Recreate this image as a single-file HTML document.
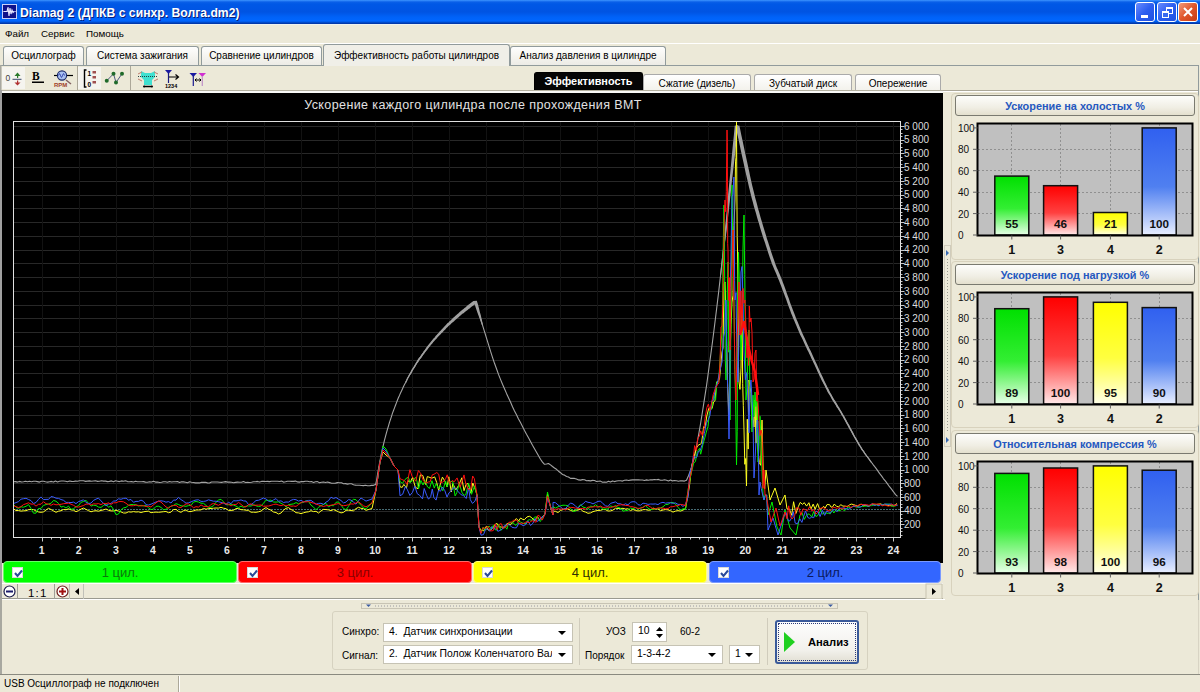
<!DOCTYPE html>
<html><head><meta charset="utf-8">
<style>
*{box-sizing:border-box;margin:0;padding:0}
html,body{width:1200px;height:692px;overflow:hidden;background:#ECE9D8;font-family:"Liberation Sans",sans-serif;font-size:11px;color:#000;position:relative}
.a{position:absolute}
#title{left:0;top:0;width:1200px;height:24px;background:linear-gradient(#3d95ff 0,#0a5fe8 2px,#0058e6 4px,#0054e3 12px,#0062f8 17px,#0066ff 21px,#0040b8 23px,#0030a0 24px)}
#title .t{left:20px;top:6px;color:#fff;font-weight:bold;font-size:12.2px;text-shadow:1px 1px 0 #0a1e78}
.wb{top:2px;width:20px;height:20px;border:1px solid #fff;border-radius:3px;background:linear-gradient(135deg,#6a8cff,#2c5ef0 50%,#1f50e0)}
.wb.x{background:linear-gradient(135deg,#f29a7a,#e0562b 50%,#c83c14)}
#menu{left:0;top:24px;width:1200px;height:20px;background:#ECE9D8}
#menu span{position:absolute;top:3px;font-size:9.8px}
.tab{position:absolute;top:46px;height:19px;border:1px solid #919b9c;border-bottom:none;border-radius:3px 3px 0 0;background:linear-gradient(#fefefe,#f4f3ee 60%,#ecebe6);font-size:10px;text-align:center;padding-top:3px;color:#000}
.tab.act{top:44px;height:22px;background:#f0efe8;border-color:#919b9c;padding-top:5px;z-index:2}
#toolbar{left:0;top:66px;width:945px;height:26px;background:#ECE9D8}
.stab{position:absolute;top:74px;height:16px;border:1px solid #aaa;border-bottom:none;border-radius:3px 3px 0 0;background:linear-gradient(#fff,#f3f2ec);font-size:10px;text-align:center;padding-top:3px}
.stab.act{top:72px;height:18px;background:#050505;border-color:#000;color:#fff;font-weight:bold;font-size:10.9px;padding-top:2px}
#black{left:2px;top:93px;width:941px;height:470px;background:#000}
#leftedge{left:0;top:90px;width:2px;height:510px;background:#a0a0a0}
.seg{position:absolute;top:561px;height:22px;border-radius:4px;text-align:center;font-size:13px;padding-top:3px}
.cb{position:absolute;left:8px;top:5px;width:11px;height:11px;background:#fff;border:1px solid #d8d8d8}
.cb svg{position:absolute;left:0;top:0}
#scroll{left:2px;top:583px;width:941px;height:16px;background:#ECE9D8;border-top:1px solid #fff;border-bottom:1px solid #9a9a90}
.panel{position:absolute;left:951px;width:248px;border:1px solid #d8d2bd;border-radius:4px}
.ptitle{position:absolute;left:955px;width:240px;height:21px;border:1px solid #7a7a70;border-radius:3px;background:linear-gradient(#fdfdfb,#f0eee4 60%,#e4e0ce);color:#2558c0;font-weight:bold;font-size:10.9px;text-align:center;padding-top:4px}
#status{left:0;top:674px;width:1200px;height:18px;border-top:1px solid #8a8a80;background:#ECE9D8}
.combo{position:absolute;height:19px;background:#fff;border:1px solid #c6c3b4;font-size:10.4px;padding:2px 0 0 5px}
.combo .arr{position:absolute;right:6px;top:7px;width:0;height:0;border-left:4px solid transparent;border-right:4px solid transparent;border-top:4px solid #000}
</style></head><body>

<div id="title" class="a">
  <div class="a" style="left:2px;top:4px;width:15px;height:15px;background:#10128a;border:1px solid #c8d0f8"><svg width="13" height="13" style="position:absolute;left:0;top:0"><line x1="0" y1="6.5" x2="13" y2="6.5" stroke="#b0b8f0" stroke-width="0.8"/><path d="M1,6.5 L4,6.5 L5,2 L6,11 L7,3 L8,9 L9,5 L10,7.5 L11,6.5" stroke="#e8e8ff" stroke-width="1.1" fill="none"/></svg></div>
  <div class="a t">Diamag 2 (ДПКВ с синхр. Волга.dm2)</div>
  <div class="a wb" style="left:1135px"><div class="a" style="left:5px;top:12px;width:7px;height:3px;background:#fff"></div></div>
  <div class="a wb" style="left:1157px"><div class="a" style="left:8px;top:4px;width:7px;height:7px;border:1px solid #fff;border-top-width:2px"></div><div class="a" style="left:4px;top:8px;width:7px;height:7px;border:1px solid #fff;border-top-width:2px;background:#3a6af0"></div></div>
  <div class="a wb x" style="left:1178px"><svg width="18" height="18" class="a" style="left:0;top:0"><path d="M5,5 L13,13 M13,5 L5,13" stroke="#fff" stroke-width="2"/></svg></div>
</div>

<div class="a" style="left:0;top:24px;width:1200px;height:1px;background:#eef2f0"></div>
<div id="menu" class="a" style="top:25px;height:18px">
  <span style="left:5px">Файл</span><span style="left:41px">Сервис</span><span style="left:86px">Помощь</span>
</div>
<div class="a" style="left:0;top:43px;width:1200px;height:1px;background:#fff"></div>

<div class="tab" style="left:3px;width:81px">Осциллограф</div>
<div class="tab" style="left:86px;width:113px">Система зажигания</div>
<div class="tab" style="left:201px;width:121px">Сравнение цилиндров</div>
<div class="tab act" style="left:323px;width:187px">Эффективность работы цилиндров</div>
<div class="tab" style="left:510px;width:156px">Анализ давления в цилиндре</div>

<div id="toolbar" class="a"></div>
<div class="a" style="left:0;top:65px;width:323px;height:1px;background:#919b9c"></div>
<div class="a" style="left:510px;top:65px;width:689px;height:1px;background:#919b9c"></div>
<div class="a" style="left:1198px;top:65px;width:1px;height:609px;background:#919b9c"></div>
<div class="a" style="left:943px;top:90px;width:255px;height:1px;background:#aca899"></div>
<div class="a" style="left:943px;top:91px;width:255px;height:1px;background:#fff"></div>
<div class="a" style="left:2px;top:67px;width:23px;height:22px;background:#f5f4ef"></div>
<svg class="a" style="left:0;top:64px" width="220" height="28">
  <rect x="0" y="1" width="1.5" height="27" fill="#a8a8a0"/>
  <!-- icon1 -->
  <text x="5.5" y="17" font-size="8.5" fill="#404040">0</text>
  <line x1="12.5" y1="15.3" x2="21.5" y2="15.3" stroke="#3a4a6a" stroke-width="1"/>
  <path d="M17.5,8.5 L14.5,12 H20.5 Z" fill="#2a7a2a"/><rect x="17" y="11.5" width="1.2" height="2.5" fill="#2a7a2a"/>
  <path d="M17.5,21.5 L14.5,18.5 H20.5 Z" fill="#b03030"/><rect x="17" y="16.5" width="1.2" height="2.5" fill="#b03030"/>
  <!-- icon2 B -->
  <text x="32" y="16" font-size="11.5" font-weight="bold" font-family="Liberation Serif" fill="#000">B</text>
  <rect x="32" y="17.5" width="12" height="1.5" fill="#000"/>
  <!-- icon3 -->
  <line x1="54" y1="11.5" x2="73" y2="11.5" stroke="#000" stroke-width="1.2"/>
  <circle cx="62" cy="11.5" r="4.6" fill="#a8c0f0" stroke="#1a2a6a" stroke-width="1.1"/>
  <path d="M58.5,11.5 q1,-3.5 2,0 t2,0 t2,0" stroke="#2030a0" fill="none" stroke-width="0.9"/>
  <path d="M66,16 L71,20" stroke="#806060" stroke-width="1.5"/>
  <text x="54" y="23" font-size="6" font-weight="bold" fill="#a04028">RPM</text>
  <rect x="77" y="2" width="1" height="24" fill="#aca899"/>
  <rect x="78" y="3" width="23" height="22" fill="#f5f4ef"/>
  <!-- icon4 -->
  <path d="M86.5,6 H84.5 V23 H86.5" stroke="#000" fill="none" stroke-width="1.4"/>
  <text x="87.5" y="11.5" font-size="6.5" font-weight="bold">1</text><text x="87.5" y="23" font-size="6.5" font-weight="bold">0</text>
  <rect x="92.5" y="7" width="3.5" height="2.5" fill="#a05050"/><rect x="92.5" y="12" width="3.5" height="2.5" fill="#a05050"/><rect x="92.5" y="17" width="3.5" height="2.5" fill="#a05050"/>
  <!-- icon5 zigzag -->
  <path d="M106.75,16.75 L113.5,9.75 L116,18.5 L122,9.75" stroke="#505a80" stroke-width="1" fill="none"/>
  <circle cx="106.75" cy="16.75" r="2" fill="#1f6a2a"/><circle cx="113.5" cy="9.75" r="2" fill="#1f6a2a"/><circle cx="116" cy="18.5" r="2" fill="#1f6a2a"/><circle cx="122" cy="9.75" r="2" fill="#1f6a2a"/>
  <rect x="130" y="2" width="1" height="24" fill="#aca899"/>
  <!-- icon6 cyan -->
  <path d="M141,7 L145,9 H151 L155,7 V13 L152,16 V21 H144 V16 L141,13 Z" fill="#40e0d0"/>
  <line x1="138" y1="12.5" x2="158" y2="12.5" stroke="#204040" stroke-dasharray="1 1"/>
  <path d="M138,10 L142,8 M158,10 L154,8 M138,15 L142,17 M158,15 L154,17" stroke="#c08070" stroke-width="1"/>
  <path d="M144,22.5 H152" stroke="#000" stroke-width="1.5"/><circle cx="144" cy="22.5" r="1" fill="#000"/><circle cx="152" cy="22.5" r="1" fill="#000"/>
  <!-- icon7 -->
  <path d="M165,6 H172 L168.5,10 Z" fill="#1a1aa0"/><line x1="168.5" y1="9" x2="168.5" y2="19" stroke="#1a1a80" stroke-width="1.2"/>
  <path d="M169,13 H178 M175.5,10.5 L178.5,13 L175.5,15.5" stroke="#000" fill="none" stroke-width="1.2"/>
  <text x="165" y="23.5" font-size="5.5" font-weight="bold">1234</text>
  <!-- icon8 -->
  <path d="M189.5,9 H197 L193.3,13 Z" fill="#1a1aa0"/><line x1="193.3" y1="12" x2="193.3" y2="22" stroke="#1a1a90" stroke-width="1.2"/>
  <path d="M198.5,9 H206 L202.3,13 Z" fill="#d030d0"/><line x1="202.3" y1="12" x2="202.3" y2="22" stroke="#c090c8" stroke-width="1.2"/>
  <path d="M195,16 H201 M196.5,14.5 L195,16 L196.5,17.5 M199.5,14.5 L201,16 L199.5,17.5" stroke="#000" fill="none"/>
</svg>

<div class="stab act" style="left:534px;width:109px">Эффективность</div>
<div class="stab" style="left:643px;width:108px">Сжатие (дизель)</div>
<div class="stab" style="left:754px;width:98px">Зубчатый диск</div>
<div class="stab" style="left:855px;width:86px">Опережение</div>
<div class="a" style="left:2px;top:90px;width:941px;height:1px;background:#b4b0a0"></div>
<div class="a" style="left:2px;top:91px;width:941px;height:2px;background:#f8f8f6"></div>

<div id="leftedge" class="a"></div>
<div id="black" class="a"></div>
<svg width="1200" height="692" style="position:absolute;left:0;top:0" font-family="Liberation Sans, sans-serif"><g stroke-width="1"><line x1="13.5" y1="524.5" x2="900.5" y2="524.5" stroke="#282828"/><line x1="13.5" y1="511.5" x2="900.5" y2="511.5" stroke="#282828"/><line x1="13.5" y1="497.5" x2="900.5" y2="497.5" stroke="#282828"/><line x1="13.5" y1="483.5" x2="900.5" y2="483.5" stroke="#282828"/><line x1="13.5" y1="470.5" x2="900.5" y2="470.5" stroke="#282828"/><line x1="13.5" y1="456.5" x2="900.5" y2="456.5" stroke="#282828"/><line x1="13.5" y1="442.5" x2="900.5" y2="442.5" stroke="#282828"/><line x1="13.5" y1="428.5" x2="900.5" y2="428.5" stroke="#282828"/><line x1="13.5" y1="415.5" x2="900.5" y2="415.5" stroke="#282828"/><line x1="13.5" y1="401.5" x2="900.5" y2="401.5" stroke="#282828"/><line x1="13.5" y1="387.5" x2="900.5" y2="387.5" stroke="#282828"/><line x1="13.5" y1="373.5" x2="900.5" y2="373.5" stroke="#282828"/><line x1="13.5" y1="360.5" x2="900.5" y2="360.5" stroke="#282828"/><line x1="13.5" y1="346.5" x2="900.5" y2="346.5" stroke="#282828"/><line x1="13.5" y1="332.5" x2="900.5" y2="332.5" stroke="#282828"/><line x1="13.5" y1="318.5" x2="900.5" y2="318.5" stroke="#282828"/><line x1="13.5" y1="305.5" x2="900.5" y2="305.5" stroke="#282828"/><line x1="13.5" y1="291.5" x2="900.5" y2="291.5" stroke="#282828"/><line x1="13.5" y1="277.5" x2="900.5" y2="277.5" stroke="#282828"/><line x1="13.5" y1="263.5" x2="900.5" y2="263.5" stroke="#282828"/><line x1="13.5" y1="250.5" x2="900.5" y2="250.5" stroke="#282828"/><line x1="13.5" y1="236.5" x2="900.5" y2="236.5" stroke="#282828"/><line x1="13.5" y1="222.5" x2="900.5" y2="222.5" stroke="#282828"/><line x1="13.5" y1="208.5" x2="900.5" y2="208.5" stroke="#282828"/><line x1="13.5" y1="195.5" x2="900.5" y2="195.5" stroke="#282828"/><line x1="13.5" y1="181.5" x2="900.5" y2="181.5" stroke="#282828"/><line x1="13.5" y1="167.5" x2="900.5" y2="167.5" stroke="#282828"/><line x1="13.5" y1="153.5" x2="900.5" y2="153.5" stroke="#282828"/><line x1="13.5" y1="140.5" x2="900.5" y2="140.5" stroke="#282828"/><line x1="13.5" y1="126.5" x2="900.5" y2="126.5" stroke="#282828"/><line x1="42.5" y1="121.5" x2="42.5" y2="537.5" stroke="#121212"/><line x1="79.5" y1="121.5" x2="79.5" y2="537.5" stroke="#121212"/><line x1="116.5" y1="121.5" x2="116.5" y2="537.5" stroke="#121212"/><line x1="153.5" y1="121.5" x2="153.5" y2="537.5" stroke="#121212"/><line x1="190.5" y1="121.5" x2="190.5" y2="537.5" stroke="#121212"/><line x1="227.5" y1="121.5" x2="227.5" y2="537.5" stroke="#121212"/><line x1="264.5" y1="121.5" x2="264.5" y2="537.5" stroke="#121212"/><line x1="301.5" y1="121.5" x2="301.5" y2="537.5" stroke="#121212"/><line x1="338.5" y1="121.5" x2="338.5" y2="537.5" stroke="#121212"/><line x1="375.5" y1="121.5" x2="375.5" y2="537.5" stroke="#121212"/><line x1="412.5" y1="121.5" x2="412.5" y2="537.5" stroke="#121212"/><line x1="449.5" y1="121.5" x2="449.5" y2="537.5" stroke="#121212"/><line x1="486.5" y1="121.5" x2="486.5" y2="537.5" stroke="#121212"/><line x1="523.5" y1="121.5" x2="523.5" y2="537.5" stroke="#121212"/><line x1="560.5" y1="121.5" x2="560.5" y2="537.5" stroke="#121212"/><line x1="597.5" y1="121.5" x2="597.5" y2="537.5" stroke="#121212"/><line x1="634.5" y1="121.5" x2="634.5" y2="537.5" stroke="#121212"/><line x1="671.5" y1="121.5" x2="671.5" y2="537.5" stroke="#121212"/><line x1="708.5" y1="121.5" x2="708.5" y2="537.5" stroke="#121212"/><line x1="745.5" y1="121.5" x2="745.5" y2="537.5" stroke="#121212"/><line x1="782.5" y1="121.5" x2="782.5" y2="537.5" stroke="#121212"/><line x1="819.5" y1="121.5" x2="819.5" y2="537.5" stroke="#121212"/><line x1="856.5" y1="121.5" x2="856.5" y2="537.5" stroke="#121212"/><line x1="893.5" y1="121.5" x2="893.5" y2="537.5" stroke="#121212"/></g><g fill="#dcdcdc" font-size="10"><text x="904" y="528.2">200</text><text x="904" y="514.4">400</text><text x="904" y="500.7">600</text><text x="904" y="486.9">800</text><text x="904" y="473.2">1 000</text><text x="904" y="459.5">1 200</text><text x="904" y="445.7">1 400</text><text x="904" y="432.0">1 600</text><text x="904" y="418.2">1 800</text><text x="904" y="404.5">2 000</text><text x="904" y="390.8">2 200</text><text x="904" y="377.0">2 400</text><text x="904" y="363.3">2 600</text><text x="904" y="349.5">2 800</text><text x="904" y="335.8">3 000</text><text x="904" y="322.1">3 200</text><text x="904" y="308.3">3 400</text><text x="904" y="294.6">3 600</text><text x="904" y="280.8">3 800</text><text x="904" y="267.1">4 000</text><text x="904" y="253.4">4 200</text><text x="904" y="239.6">4 400</text><text x="904" y="225.9">4 600</text><text x="904" y="212.1">4 800</text><text x="904" y="198.4">5 000</text><text x="904" y="184.7">5 200</text><text x="904" y="170.9">5 400</text><text x="904" y="157.2">5 600</text><text x="904" y="143.4">5 800</text><text x="904" y="129.7">6 000</text></g><g fill="#e8e8e8" font-size="10.5" font-weight="bold"><text x="41.7" y="554" text-anchor="middle">1</text><text x="78.7" y="554" text-anchor="middle">2</text><text x="115.8" y="554" text-anchor="middle">3</text><text x="152.8" y="554" text-anchor="middle">4</text><text x="189.8" y="554" text-anchor="middle">5</text><text x="226.8" y="554" text-anchor="middle">6</text><text x="263.9" y="554" text-anchor="middle">7</text><text x="300.9" y="554" text-anchor="middle">8</text><text x="337.9" y="554" text-anchor="middle">9</text><text x="375.0" y="554" text-anchor="middle">10</text><text x="412.0" y="554" text-anchor="middle">11</text><text x="449.0" y="554" text-anchor="middle">12</text><text x="486.1" y="554" text-anchor="middle">13</text><text x="523.1" y="554" text-anchor="middle">14</text><text x="560.1" y="554" text-anchor="middle">15</text><text x="597.1" y="554" text-anchor="middle">16</text><text x="634.2" y="554" text-anchor="middle">17</text><text x="671.2" y="554" text-anchor="middle">18</text><text x="708.2" y="554" text-anchor="middle">19</text><text x="745.3" y="554" text-anchor="middle">20</text><text x="782.3" y="554" text-anchor="middle">21</text><text x="819.3" y="554" text-anchor="middle">22</text><text x="856.4" y="554" text-anchor="middle">23</text><text x="893.4" y="554" text-anchor="middle">24</text></g><g stroke="#c8c8c8" stroke-width="1"><line x1="900.5" y1="524.5" x2="904.5" y2="524.5"/><line x1="900.5" y1="528.5" x2="902.5" y2="528.5"/><line x1="900.5" y1="531.5" x2="902.5" y2="531.5"/><line x1="900.5" y1="535.5" x2="902.5" y2="535.5"/><line x1="900.5" y1="511.5" x2="904.5" y2="511.5"/><line x1="900.5" y1="514.5" x2="902.5" y2="514.5"/><line x1="900.5" y1="518.5" x2="902.5" y2="518.5"/><line x1="900.5" y1="521.5" x2="902.5" y2="521.5"/><line x1="900.5" y1="497.5" x2="904.5" y2="497.5"/><line x1="900.5" y1="500.5" x2="902.5" y2="500.5"/><line x1="900.5" y1="504.5" x2="902.5" y2="504.5"/><line x1="900.5" y1="507.5" x2="902.5" y2="507.5"/><line x1="900.5" y1="483.5" x2="904.5" y2="483.5"/><line x1="900.5" y1="487.5" x2="902.5" y2="487.5"/><line x1="900.5" y1="490.5" x2="902.5" y2="490.5"/><line x1="900.5" y1="494.5" x2="902.5" y2="494.5"/><line x1="900.5" y1="470.5" x2="904.5" y2="470.5"/><line x1="900.5" y1="473.5" x2="902.5" y2="473.5"/><line x1="900.5" y1="476.5" x2="902.5" y2="476.5"/><line x1="900.5" y1="480.5" x2="902.5" y2="480.5"/><line x1="900.5" y1="456.5" x2="904.5" y2="456.5"/><line x1="900.5" y1="459.5" x2="902.5" y2="459.5"/><line x1="900.5" y1="463.5" x2="902.5" y2="463.5"/><line x1="900.5" y1="466.5" x2="902.5" y2="466.5"/><line x1="900.5" y1="442.5" x2="904.5" y2="442.5"/><line x1="900.5" y1="445.5" x2="902.5" y2="445.5"/><line x1="900.5" y1="449.5" x2="902.5" y2="449.5"/><line x1="900.5" y1="452.5" x2="902.5" y2="452.5"/><line x1="900.5" y1="428.5" x2="904.5" y2="428.5"/><line x1="900.5" y1="432.5" x2="902.5" y2="432.5"/><line x1="900.5" y1="435.5" x2="902.5" y2="435.5"/><line x1="900.5" y1="439.5" x2="902.5" y2="439.5"/><line x1="900.5" y1="415.5" x2="904.5" y2="415.5"/><line x1="900.5" y1="418.5" x2="902.5" y2="418.5"/><line x1="900.5" y1="421.5" x2="902.5" y2="421.5"/><line x1="900.5" y1="425.5" x2="902.5" y2="425.5"/><line x1="900.5" y1="401.5" x2="904.5" y2="401.5"/><line x1="900.5" y1="404.5" x2="902.5" y2="404.5"/><line x1="900.5" y1="408.5" x2="902.5" y2="408.5"/><line x1="900.5" y1="411.5" x2="902.5" y2="411.5"/><line x1="900.5" y1="387.5" x2="904.5" y2="387.5"/><line x1="900.5" y1="390.5" x2="902.5" y2="390.5"/><line x1="900.5" y1="394.5" x2="902.5" y2="394.5"/><line x1="900.5" y1="397.5" x2="902.5" y2="397.5"/><line x1="900.5" y1="373.5" x2="904.5" y2="373.5"/><line x1="900.5" y1="377.5" x2="902.5" y2="377.5"/><line x1="900.5" y1="380.5" x2="902.5" y2="380.5"/><line x1="900.5" y1="384.5" x2="902.5" y2="384.5"/><line x1="900.5" y1="360.5" x2="904.5" y2="360.5"/><line x1="900.5" y1="363.5" x2="902.5" y2="363.5"/><line x1="900.5" y1="366.5" x2="902.5" y2="366.5"/><line x1="900.5" y1="370.5" x2="902.5" y2="370.5"/><line x1="900.5" y1="346.5" x2="904.5" y2="346.5"/><line x1="900.5" y1="349.5" x2="902.5" y2="349.5"/><line x1="900.5" y1="353.5" x2="902.5" y2="353.5"/><line x1="900.5" y1="356.5" x2="902.5" y2="356.5"/><line x1="900.5" y1="332.5" x2="904.5" y2="332.5"/><line x1="900.5" y1="336.5" x2="902.5" y2="336.5"/><line x1="900.5" y1="339.5" x2="902.5" y2="339.5"/><line x1="900.5" y1="342.5" x2="902.5" y2="342.5"/><line x1="900.5" y1="318.5" x2="904.5" y2="318.5"/><line x1="900.5" y1="322.5" x2="902.5" y2="322.5"/><line x1="900.5" y1="325.5" x2="902.5" y2="325.5"/><line x1="900.5" y1="329.5" x2="902.5" y2="329.5"/><line x1="900.5" y1="305.5" x2="904.5" y2="305.5"/><line x1="900.5" y1="308.5" x2="902.5" y2="308.5"/><line x1="900.5" y1="311.5" x2="902.5" y2="311.5"/><line x1="900.5" y1="315.5" x2="902.5" y2="315.5"/><line x1="900.5" y1="291.5" x2="904.5" y2="291.5"/><line x1="900.5" y1="294.5" x2="902.5" y2="294.5"/><line x1="900.5" y1="298.5" x2="902.5" y2="298.5"/><line x1="900.5" y1="301.5" x2="902.5" y2="301.5"/><line x1="900.5" y1="277.5" x2="904.5" y2="277.5"/><line x1="900.5" y1="281.5" x2="902.5" y2="281.5"/><line x1="900.5" y1="284.5" x2="902.5" y2="284.5"/><line x1="900.5" y1="287.5" x2="902.5" y2="287.5"/><line x1="900.5" y1="263.5" x2="904.5" y2="263.5"/><line x1="900.5" y1="267.5" x2="902.5" y2="267.5"/><line x1="900.5" y1="270.5" x2="902.5" y2="270.5"/><line x1="900.5" y1="274.5" x2="902.5" y2="274.5"/><line x1="900.5" y1="250.5" x2="904.5" y2="250.5"/><line x1="900.5" y1="253.5" x2="902.5" y2="253.5"/><line x1="900.5" y1="257.5" x2="902.5" y2="257.5"/><line x1="900.5" y1="260.5" x2="902.5" y2="260.5"/><line x1="900.5" y1="236.5" x2="904.5" y2="236.5"/><line x1="900.5" y1="239.5" x2="902.5" y2="239.5"/><line x1="900.5" y1="243.5" x2="902.5" y2="243.5"/><line x1="900.5" y1="246.5" x2="902.5" y2="246.5"/><line x1="900.5" y1="222.5" x2="904.5" y2="222.5"/><line x1="900.5" y1="226.5" x2="902.5" y2="226.5"/><line x1="900.5" y1="229.5" x2="902.5" y2="229.5"/><line x1="900.5" y1="232.5" x2="902.5" y2="232.5"/><line x1="900.5" y1="208.5" x2="904.5" y2="208.5"/><line x1="900.5" y1="212.5" x2="902.5" y2="212.5"/><line x1="900.5" y1="215.5" x2="902.5" y2="215.5"/><line x1="900.5" y1="219.5" x2="902.5" y2="219.5"/><line x1="900.5" y1="195.5" x2="904.5" y2="195.5"/><line x1="900.5" y1="198.5" x2="902.5" y2="198.5"/><line x1="900.5" y1="202.5" x2="902.5" y2="202.5"/><line x1="900.5" y1="205.5" x2="902.5" y2="205.5"/><line x1="900.5" y1="181.5" x2="904.5" y2="181.5"/><line x1="900.5" y1="184.5" x2="902.5" y2="184.5"/><line x1="900.5" y1="188.5" x2="902.5" y2="188.5"/><line x1="900.5" y1="191.5" x2="902.5" y2="191.5"/><line x1="900.5" y1="167.5" x2="904.5" y2="167.5"/><line x1="900.5" y1="171.5" x2="902.5" y2="171.5"/><line x1="900.5" y1="174.5" x2="902.5" y2="174.5"/><line x1="900.5" y1="178.5" x2="902.5" y2="178.5"/><line x1="900.5" y1="153.5" x2="904.5" y2="153.5"/><line x1="900.5" y1="157.5" x2="902.5" y2="157.5"/><line x1="900.5" y1="160.5" x2="902.5" y2="160.5"/><line x1="900.5" y1="164.5" x2="902.5" y2="164.5"/><line x1="900.5" y1="140.5" x2="904.5" y2="140.5"/><line x1="900.5" y1="143.5" x2="902.5" y2="143.5"/><line x1="900.5" y1="147.5" x2="902.5" y2="147.5"/><line x1="900.5" y1="150.5" x2="902.5" y2="150.5"/><line x1="900.5" y1="126.5" x2="904.5" y2="126.5"/><line x1="900.5" y1="129.5" x2="902.5" y2="129.5"/><line x1="900.5" y1="133.5" x2="902.5" y2="133.5"/><line x1="900.5" y1="136.5" x2="902.5" y2="136.5"/><line x1="42.5" y1="537.5" x2="42.5" y2="541.5"/><line x1="51.5" y1="537.5" x2="51.5" y2="539.5"/><line x1="60.5" y1="537.5" x2="60.5" y2="539.5"/><line x1="69.5" y1="537.5" x2="69.5" y2="539.5"/><line x1="79.5" y1="537.5" x2="79.5" y2="541.5"/><line x1="88.5" y1="537.5" x2="88.5" y2="539.5"/><line x1="97.5" y1="537.5" x2="97.5" y2="539.5"/><line x1="107.5" y1="537.5" x2="107.5" y2="539.5"/><line x1="116.5" y1="537.5" x2="116.5" y2="541.5"/><line x1="125.5" y1="537.5" x2="125.5" y2="539.5"/><line x1="134.5" y1="537.5" x2="134.5" y2="539.5"/><line x1="144.5" y1="537.5" x2="144.5" y2="539.5"/><line x1="153.5" y1="537.5" x2="153.5" y2="541.5"/><line x1="162.5" y1="537.5" x2="162.5" y2="539.5"/><line x1="171.5" y1="537.5" x2="171.5" y2="539.5"/><line x1="181.5" y1="537.5" x2="181.5" y2="539.5"/><line x1="190.5" y1="537.5" x2="190.5" y2="541.5"/><line x1="199.5" y1="537.5" x2="199.5" y2="539.5"/><line x1="208.5" y1="537.5" x2="208.5" y2="539.5"/><line x1="218.5" y1="537.5" x2="218.5" y2="539.5"/><line x1="227.5" y1="537.5" x2="227.5" y2="541.5"/><line x1="236.5" y1="537.5" x2="236.5" y2="539.5"/><line x1="245.5" y1="537.5" x2="245.5" y2="539.5"/><line x1="255.5" y1="537.5" x2="255.5" y2="539.5"/><line x1="264.5" y1="537.5" x2="264.5" y2="541.5"/><line x1="273.5" y1="537.5" x2="273.5" y2="539.5"/><line x1="282.5" y1="537.5" x2="282.5" y2="539.5"/><line x1="292.5" y1="537.5" x2="292.5" y2="539.5"/><line x1="301.5" y1="537.5" x2="301.5" y2="541.5"/><line x1="310.5" y1="537.5" x2="310.5" y2="539.5"/><line x1="319.5" y1="537.5" x2="319.5" y2="539.5"/><line x1="329.5" y1="537.5" x2="329.5" y2="539.5"/><line x1="338.5" y1="537.5" x2="338.5" y2="541.5"/><line x1="347.5" y1="537.5" x2="347.5" y2="539.5"/><line x1="356.5" y1="537.5" x2="356.5" y2="539.5"/><line x1="366.5" y1="537.5" x2="366.5" y2="539.5"/><line x1="375.5" y1="537.5" x2="375.5" y2="541.5"/><line x1="384.5" y1="537.5" x2="384.5" y2="539.5"/><line x1="393.5" y1="537.5" x2="393.5" y2="539.5"/><line x1="403.5" y1="537.5" x2="403.5" y2="539.5"/><line x1="412.5" y1="537.5" x2="412.5" y2="541.5"/><line x1="421.5" y1="537.5" x2="421.5" y2="539.5"/><line x1="431.5" y1="537.5" x2="431.5" y2="539.5"/><line x1="440.5" y1="537.5" x2="440.5" y2="539.5"/><line x1="449.5" y1="537.5" x2="449.5" y2="541.5"/><line x1="458.5" y1="537.5" x2="458.5" y2="539.5"/><line x1="468.5" y1="537.5" x2="468.5" y2="539.5"/><line x1="477.5" y1="537.5" x2="477.5" y2="539.5"/><line x1="486.5" y1="537.5" x2="486.5" y2="541.5"/><line x1="495.5" y1="537.5" x2="495.5" y2="539.5"/><line x1="505.5" y1="537.5" x2="505.5" y2="539.5"/><line x1="514.5" y1="537.5" x2="514.5" y2="539.5"/><line x1="523.5" y1="537.5" x2="523.5" y2="541.5"/><line x1="532.5" y1="537.5" x2="532.5" y2="539.5"/><line x1="542.5" y1="537.5" x2="542.5" y2="539.5"/><line x1="551.5" y1="537.5" x2="551.5" y2="539.5"/><line x1="560.5" y1="537.5" x2="560.5" y2="541.5"/><line x1="569.5" y1="537.5" x2="569.5" y2="539.5"/><line x1="579.5" y1="537.5" x2="579.5" y2="539.5"/><line x1="588.5" y1="537.5" x2="588.5" y2="539.5"/><line x1="597.5" y1="537.5" x2="597.5" y2="541.5"/><line x1="606.5" y1="537.5" x2="606.5" y2="539.5"/><line x1="616.5" y1="537.5" x2="616.5" y2="539.5"/><line x1="625.5" y1="537.5" x2="625.5" y2="539.5"/><line x1="634.5" y1="537.5" x2="634.5" y2="541.5"/><line x1="643.5" y1="537.5" x2="643.5" y2="539.5"/><line x1="653.5" y1="537.5" x2="653.5" y2="539.5"/><line x1="662.5" y1="537.5" x2="662.5" y2="539.5"/><line x1="671.5" y1="537.5" x2="671.5" y2="541.5"/><line x1="680.5" y1="537.5" x2="680.5" y2="539.5"/><line x1="690.5" y1="537.5" x2="690.5" y2="539.5"/><line x1="699.5" y1="537.5" x2="699.5" y2="539.5"/><line x1="708.5" y1="537.5" x2="708.5" y2="541.5"/><line x1="717.5" y1="537.5" x2="717.5" y2="539.5"/><line x1="727.5" y1="537.5" x2="727.5" y2="539.5"/><line x1="736.5" y1="537.5" x2="736.5" y2="539.5"/><line x1="745.5" y1="537.5" x2="745.5" y2="541.5"/><line x1="755.5" y1="537.5" x2="755.5" y2="539.5"/><line x1="764.5" y1="537.5" x2="764.5" y2="539.5"/><line x1="773.5" y1="537.5" x2="773.5" y2="539.5"/><line x1="782.5" y1="537.5" x2="782.5" y2="541.5"/><line x1="792.5" y1="537.5" x2="792.5" y2="539.5"/><line x1="801.5" y1="537.5" x2="801.5" y2="539.5"/><line x1="810.5" y1="537.5" x2="810.5" y2="539.5"/><line x1="819.5" y1="537.5" x2="819.5" y2="541.5"/><line x1="829.5" y1="537.5" x2="829.5" y2="539.5"/><line x1="838.5" y1="537.5" x2="838.5" y2="539.5"/><line x1="847.5" y1="537.5" x2="847.5" y2="539.5"/><line x1="856.5" y1="537.5" x2="856.5" y2="541.5"/><line x1="866.5" y1="537.5" x2="866.5" y2="539.5"/><line x1="875.5" y1="537.5" x2="875.5" y2="539.5"/><line x1="884.5" y1="537.5" x2="884.5" y2="539.5"/><line x1="893.5" y1="537.5" x2="893.5" y2="541.5"/></g><line x1="13.5" y1="509.5" x2="900.5" y2="509.5" stroke="#8fd8e8" stroke-width="1" stroke-dasharray="1 2"/><polyline points="13.5,481.8 15.5,481.6 17.5,482.1 19.5,481.4 21.5,482.0 23.5,481.7 25.5,481.3 27.5,481.8 29.5,481.3 31.5,481.7 33.5,481.3 35.5,481.3 37.5,481.6 39.5,482.1 41.5,481.2 43.5,481.3 45.5,481.8 47.5,482.1 49.5,481.7 51.5,481.4 53.5,482.1 55.5,481.0 57.5,481.9 59.5,481.2 61.5,481.0 63.5,481.0 65.5,481.2 67.5,481.8 69.5,481.0 71.5,481.4 73.5,481.5 75.5,481.1 77.5,481.3 79.5,480.7 81.5,480.7 83.5,480.8 85.5,481.4 87.5,481.1 89.5,480.9 91.5,481.2 93.5,481.0 95.5,480.8 97.5,481.4 99.5,481.2 101.5,480.7 103.5,481.1 105.5,481.1 107.5,481.6 109.5,481.4 111.5,480.9 113.5,481.8 115.5,480.8 117.5,481.2 119.5,481.6 121.5,480.9 123.5,481.3 125.5,480.8 127.5,481.6 129.5,481.8 131.5,481.6 133.5,482.0 135.5,481.3 137.5,481.8 139.5,481.7 141.5,481.7 143.5,481.6 145.5,482.1 147.5,482.2 149.5,481.7 151.5,482.0 153.5,481.3 155.5,482.1 157.5,482.0 159.5,482.5 161.5,482.3 163.5,481.7 165.5,481.8 167.5,482.2 169.5,481.5 171.5,482.0 173.5,481.7 175.5,481.7 177.5,481.6 179.5,482.5 181.5,481.8 183.5,481.9 185.5,482.2 187.5,482.8 189.5,481.8 191.5,482.3 193.5,482.5 195.5,482.9 197.5,482.8 199.5,482.9 201.5,482.2 203.5,482.4 205.5,482.3 207.5,482.9 209.5,483.0 211.5,482.0 213.5,482.0 215.5,482.0 217.5,482.0 219.5,482.3 221.5,482.4 223.5,482.0 225.5,481.6 227.5,482.1 229.5,482.0 231.5,482.3 233.5,482.7 235.5,482.4 237.5,482.1 239.5,482.2 241.5,482.3 243.5,481.5 245.5,482.5 247.5,482.4 249.5,482.5 251.5,482.3 253.5,481.8 255.5,481.8 257.5,481.4 259.5,482.1 261.5,481.4 263.5,481.3 265.5,481.5 267.5,481.4 269.5,481.6 271.5,481.2 273.5,481.2 275.5,481.3 277.5,481.2 279.5,481.5 281.5,481.1 283.5,482.1 285.5,481.8 287.5,481.2 289.5,481.3 291.5,481.4 293.5,481.4 295.5,481.1 297.5,481.9 299.5,482.1 301.5,481.5 303.5,481.6 305.5,481.2 307.5,481.3 309.5,481.7 311.5,481.6 313.5,482.4 315.5,481.7 317.5,481.6 319.5,482.8 321.5,482.3 323.5,482.0 325.5,482.5 327.5,482.0 329.5,482.6 331.5,483.3 333.5,483.2 335.5,483.1 337.5,482.6 339.5,482.8 341.5,482.8 343.5,483.7 345.5,483.6 347.5,484.1 349.5,483.7 351.5,483.8 353.5,484.7 355.5,485.1 357.5,485.2 359.5,485.3 361.5,485.5 363.5,485.6 365.5,485.2 367.5,485.8 369.5,485.8 371.5,485.4 372.5,485.4 373.5,485.4 374.5,484.7 375.5,484.6 376.5,481.0 377.5,474.5 378.5,468.8 379.5,463.4 380.5,458.2 381.5,453.2 382.5,448.6 383.5,444.3 384.5,440.1 385.5,436.3 386.5,432.7 387.5,429.2 388.5,425.8 389.5,422.4 390.5,419.3 391.5,416.3 392.5,413.1 393.5,410.5 394.5,407.9 395.5,405.2 396.5,402.6 397.5,400.0 398.5,397.5 399.5,395.4 400.5,393.0 401.5,390.9 402.5,388.8 403.5,386.5 404.5,384.5 405.5,382.7 406.5,380.7 407.5,378.5 408.5,376.7 409.5,374.9 410.5,373.4 411.5,371.6 412.5,369.6 413.5,368.2 414.5,366.6 415.5,364.9 416.5,363.2 417.5,361.8 418.5,360.1 419.5,358.5 420.5,357.5 421.5,355.9 422.5,354.4 423.5,353.2 424.5,351.6 425.5,350.5 426.5,349.1 427.5,347.6 428.5,346.3 429.5,345.1 430.5,343.8 431.5,342.8 432.5,341.4 433.5,340.3 434.5,339.0 435.5,338.2 436.5,336.8 437.5,335.7 438.5,334.7 439.5,333.7 440.5,332.4 441.5,331.6 442.5,330.4 443.5,329.3 444.5,328.3 445.5,327.1 446.5,326.3 447.5,325.2 448.5,324.1 449.5,323.5 450.5,322.3 451.5,321.5 452.5,320.6 453.5,319.7 454.5,318.7 455.5,317.8 456.5,317.0 457.5,316.2 458.5,315.0 459.5,314.4 460.5,313.4 461.5,312.5 462.5,311.9 463.5,311.0 464.5,310.2 465.5,309.5 466.5,308.7 467.5,307.7 468.5,307.0 469.5,306.2 470.5,305.4 471.5,304.7 472.5,303.9 473.5,303.2 474.5,302.4 475.5,301.8 476.5,304.8 477.5,308.4 478.5,311.9 479.5,314.9 480.5,318.3 482.5,325.1 484.5,331.7 486.5,338.1 488.5,344.6 490.5,351.2 492.5,357.3 494.5,363.3 496.5,368.8 498.5,374.4 500.5,379.4 502.5,384.3 504.5,388.7 506.5,393.4 508.5,397.8 510.5,402.0 512.5,406.7 514.5,410.9 516.5,414.7 518.5,418.9 520.5,422.6 522.5,426.5 524.5,430.5 526.5,434.2 528.5,437.7 530.5,441.5 532.5,445.2 534.5,448.7 536.5,452.2 538.5,455.7 540.5,459.3 542.5,462.1 544.5,464.3 546.5,464.0 548.5,463.5 550.5,464.9 552.5,466.5 554.5,468.0 556.5,469.3 558.5,471.2 560.5,472.7 562.5,474.5 564.5,475.1 566.5,476.5 568.5,477.0 570.5,478.4 572.5,478.2 574.5,478.4 576.5,479.1 578.5,479.9 580.5,480.1 582.5,479.6 584.5,479.7 586.5,480.8 588.5,480.6 590.5,480.9 592.5,480.4 594.5,480.5 596.5,481.5 598.5,481.3 600.5,481.1 602.5,482.3 604.5,482.1 606.5,482.2 608.5,481.2 610.5,482.0 612.5,480.9 614.5,481.6 616.5,481.0 618.5,480.7 620.5,480.8 622.5,481.1 624.5,480.2 626.5,480.0 628.5,480.5 630.5,480.1 632.5,479.9 634.5,479.9 636.5,479.8 638.5,479.9 640.5,480.0 642.5,480.0 644.5,480.5 646.5,479.9 648.5,480.2 650.5,479.7 652.5,479.9 654.5,479.5 656.5,479.7 658.5,479.4 660.5,480.3 662.5,480.2 664.5,479.8 666.5,480.2 668.5,480.9 670.5,480.0 672.5,480.9 674.5,480.5 676.5,480.7 678.5,481.2 680.5,480.7 682.5,480.9 684.5,481.1 686.5,480.3 688.5,475.8 690.5,470.5 692.5,463.9 694.5,457.4 696.5,446.5 698.5,435.4 700.5,424.2 702.5,411.5 704.5,398.7 706.5,385.9 708.5,371.2 710.5,356.7 712.5,341.8 714.5,326.0 716.5,309.8 718.5,293.2 720.5,275.7 721.5,267.1 722.5,258.4 723.5,249.9 724.5,241.1 725.5,232.6 726.5,222.9 727.5,213.2 728.5,203.2 729.5,193.0 730.5,182.9 731.5,173.7 732.5,163.8 733.5,154.3 734.5,144.5 735.5,135.1 736.5,125.6 737.5,125.9 738.5,130.5 739.5,135.3 740.5,139.9 741.5,144.7 742.5,149.3 743.5,154.1 744.5,158.6 745.5,163.2 746.5,167.9 747.5,172.4 748.5,177.0 749.5,181.4 750.5,185.8 751.5,189.9 752.5,194.0 753.5,198.1 754.5,201.7 755.5,205.4 756.5,209.3 757.5,212.6 758.5,216.3 759.5,219.7 760.5,222.8 761.5,226.5 762.5,229.8 763.5,232.9 764.5,236.2 765.5,239.4 766.5,242.2 767.5,245.5 768.5,248.6 769.5,251.8 770.5,254.8 771.5,257.8 772.5,260.6 773.5,263.4 774.5,266.0 775.5,268.5 776.5,270.7 777.5,273.0 778.5,275.4 779.5,277.9 780.5,280.2 781.5,283.1 782.5,285.6 783.5,288.3 784.5,291.1 785.5,293.8 786.5,296.5 787.5,299.1 788.5,302.1 789.5,304.9 790.5,307.5 791.5,310.2 792.5,312.9 793.5,315.2 794.5,318.0 795.5,320.3 796.5,322.7 797.5,325.1 798.5,327.6 799.5,329.7 800.5,332.2 801.5,334.5 802.5,336.5 803.5,338.6 804.5,340.8 805.5,343.0 806.5,345.2 807.5,347.3 808.5,349.4 809.5,351.3 810.5,353.5 811.5,355.7 812.5,358.0 813.5,360.0 814.5,362.3 815.5,364.2 816.5,366.4 817.5,368.7 818.5,371.0 819.5,373.1 820.5,375.3 821.5,377.2 822.5,379.4 823.5,381.5 824.5,383.5 825.5,385.4 826.5,387.6 827.5,389.3 828.5,391.5 829.5,393.3 830.5,394.7 831.5,396.6 832.5,398.5 833.5,400.2 834.5,401.7 835.5,403.2 836.5,404.8 837.5,406.8 838.5,408.1 839.5,409.9 840.5,411.3 841.5,413.2 842.5,415.0 843.5,416.4 844.5,418.5 845.5,420.1 846.5,422.1 847.5,423.8 848.5,425.5 849.5,427.6 850.5,429.3 851.5,431.0 852.5,432.9 853.5,434.9 854.5,436.7 855.5,438.4 856.5,440.1 857.5,442.0 858.5,443.6 859.5,445.5 860.5,446.7 861.5,448.6 862.5,450.1 863.5,451.3 864.5,453.0 865.5,454.4 866.5,455.8 867.5,457.0 868.5,458.3 869.5,459.7 870.5,461.3 871.5,462.5 872.5,463.7 873.5,465.1 874.5,466.4 875.5,467.6 877.5,470.4 879.5,473.4 881.5,475.9 883.5,478.8 885.5,481.2 887.5,483.9 889.5,486.7 891.5,489.2 893.5,491.8 895.5,494.6 897.5,496.4" fill="none" stroke="#a4a4a4" stroke-width="1.1" stroke-opacity="1" stroke-linejoin="round"/><polygon points="406.0,383.0 407.0,380.9 408.0,378.8 409.0,376.9 410.0,375.2 411.1,373.7 412.1,371.9 413.1,370.0 414.1,368.6 415.1,367.0 416.1,365.3 417.1,363.6 418.2,362.2 419.2,360.5 420.2,359.0 421.2,358.0 422.2,356.4 423.2,355.0 424.2,353.7 425.2,352.2 426.2,351.1 427.3,349.7 428.3,348.2 429.3,347.0 430.3,345.7 431.3,344.5 432.3,343.4 433.3,342.1 434.3,341.0 435.3,339.8 436.3,338.9 437.4,337.5 438.3,336.5 439.3,335.5 440.4,334.5 441.4,333.3 442.4,332.4 443.4,331.2 444.4,330.2 445.5,329.2 446.4,328.0 447.4,327.2 448.5,326.1 449.4,325.2 450.4,324.5 451.5,323.3 452.4,322.6 453.5,321.7 454.5,320.7 455.5,319.7 456.5,319.0 457.5,318.1 458.6,317.3 459.5,316.2 460.5,315.6 461.6,314.6 462.4,313.8 463.5,313.2 464.6,312.2 465.5,311.5 466.5,310.8 467.6,310.0 468.6,309.0 469.6,308.4 470.6,307.6 471.5,306.8 472.6,306.1 473.6,305.3 474.6,304.6 475.6,303.9 474.2,302.9 475.0,305.3 476.1,308.8 477.3,312.2 478.4,315.2 479.6,318.6 482.0,325.3 483.0,325.0 481.4,318.0 480.6,314.6 479.7,311.5 478.9,308.0 478.0,304.4 476.8,300.7 473.4,300.9 472.4,301.7 471.4,302.5 470.4,303.3 469.5,304.0 468.4,304.8 467.4,305.6 466.4,306.4 465.4,307.4 464.5,308.1 463.5,308.9 462.4,309.7 461.5,310.6 460.6,311.3 459.4,312.2 458.5,313.2 457.5,313.9 456.4,315.1 455.5,315.8 454.5,316.7 453.5,317.6 452.5,318.6 451.5,319.6 450.6,320.4 449.5,321.3 448.6,322.5 447.6,323.1 446.5,324.3 445.6,325.3 444.6,326.2 443.5,327.5 442.6,328.5 441.6,329.5 440.6,330.7 439.6,331.6 438.6,332.9 437.7,333.8 436.7,334.9 435.6,336.1 434.7,337.4 433.7,338.3 432.7,339.6 431.7,340.7 430.7,342.1 429.7,343.2 428.7,344.5 427.7,345.7 426.7,347.0 425.7,348.6 424.8,349.9 423.8,351.1 422.8,352.7 421.8,353.9 420.8,355.4 419.8,357.0 418.8,358.0 417.8,359.6 416.8,361.3 415.9,362.8 414.9,364.5 413.9,366.3 412.9,367.8 411.9,369.3 410.9,371.3 409.9,373.0 409.0,374.5 408.0,376.4 407.0,378.3 406.0,380.4 405.0,382.5" fill="#a0a0a0"/><polygon points="721.0,275.8 722.0,267.1 723.1,258.5 724.2,249.9 725.2,241.2 726.3,232.7 727.4,223.0 728.5,213.3 729.6,203.3 730.7,193.1 731.7,183.1 732.8,173.8 733.9,164.0 735.0,154.4 736.1,144.7 737.1,135.3 738.2,125.7 734.8,125.4 733.9,134.9 732.9,144.4 732.0,154.1 731.1,163.7 730.2,173.5 729.3,182.8 728.3,192.9 727.4,203.1 726.5,213.1 725.6,222.8 724.7,232.5 723.8,241.0 722.8,249.8 721.9,258.4 721.0,267.0 720.0,275.7" fill="#a0a0a0"/><polygon points="735.7,126.3 736.7,130.9 737.7,135.7 738.7,140.2 739.7,145.1 740.7,149.7 741.7,154.5 742.7,159.0 743.7,163.6 744.7,168.3 745.7,172.8 746.8,177.4 747.8,181.8 748.8,186.2 749.8,190.3 750.8,194.4 751.8,198.5 752.8,202.1 753.8,205.9 754.9,209.8 755.9,213.0 756.9,216.7 757.9,220.2 758.9,223.3 759.9,226.9 760.9,230.3 761.9,233.4 762.9,236.7 764.0,239.9 765.0,242.7 766.0,246.0 767.0,249.1 768.0,252.3 769.0,255.3 770.0,258.3 771.0,261.1 772.0,264.0 773.1,266.5 774.1,269.1 775.1,271.3 776.1,273.6 777.1,275.9 778.1,278.4 779.1,280.8 780.1,283.6 781.1,286.1 782.1,288.8 783.1,291.6 784.2,294.3 785.2,297.0 786.2,299.6 787.2,302.6 788.2,305.3 789.2,308.0 790.2,310.6 791.2,313.4 792.2,315.7 793.2,318.5 794.3,320.8 795.3,323.2 796.3,325.6 797.3,328.1 798.3,330.2 799.3,332.7 800.3,335.0 801.4,337.0 802.4,339.1 803.4,341.3 804.4,343.5 805.4,345.7 806.4,347.8 807.4,349.9 808.4,351.8 809.4,354.0 810.4,356.1 811.4,358.5 812.5,360.5 813.5,362.8 814.5,364.7 815.5,366.9 816.5,369.1 817.5,371.4 818.5,373.6 819.5,375.7 820.5,377.7 821.5,379.9 822.6,381.9 823.6,384.0 824.6,385.8 825.6,388.1 826.6,389.8 827.6,391.9 828.7,393.8 829.7,395.2 830.7,397.1 831.7,398.9 832.7,400.7 833.7,402.2 834.7,403.7 835.7,405.3 836.7,407.2 837.8,408.6 838.8,410.3 839.8,411.8 840.8,413.6 841.8,415.5 842.8,416.8 843.8,418.8 844.8,420.5 845.8,422.5 846.8,424.2 847.8,425.9 848.8,428.0 849.8,429.7 850.9,431.4 851.8,433.2 852.9,435.2 853.9,437.1 854.9,438.8 855.9,440.5 856.9,442.3 857.9,443.9 858.9,445.8 860.0,447.1 861.0,448.9 862.0,450.5 863.0,451.6 864.0,453.4 865.1,454.7 866.1,456.2 867.1,457.3 868.1,458.7 869.0,460.0 870.1,461.6 871.1,462.8 871.9,462.1 870.9,461.0 870.0,459.4 868.9,458.0 867.9,456.6 866.9,455.5 865.9,454.1 865.0,452.7 864.0,450.9 863.0,449.7 862.0,448.2 861.0,446.4 860.1,445.1 859.1,443.3 858.1,441.6 857.1,439.8 856.1,438.1 855.1,436.4 854.1,434.6 853.2,432.5 852.1,430.7 851.2,429.0 850.2,427.3 849.2,425.1 848.2,423.4 847.2,421.7 846.2,419.7 845.2,418.1 844.2,416.0 843.2,414.6 842.2,412.7 841.2,410.9 840.2,409.4 839.2,407.6 838.3,406.3 837.3,404.4 836.3,402.7 835.3,401.1 834.3,399.7 833.3,398.0 832.3,396.2 831.3,394.2 830.3,392.8 829.4,391.0 828.4,388.8 827.4,387.2 826.4,384.9 825.4,383.0 824.4,381.0 823.5,379.0 822.5,376.8 821.5,374.8 820.5,372.7 819.5,370.5 818.5,368.2 817.5,366.0 816.5,363.7 815.5,361.8 814.5,359.5 813.6,357.5 812.6,355.2 811.6,353.0 810.6,350.8 809.6,348.9 808.6,346.7 807.6,344.7 806.6,342.5 805.6,340.3 804.6,338.1 803.6,335.9 802.7,333.9 801.7,331.7 800.7,329.2 799.7,327.1 798.7,324.6 797.7,322.1 796.7,319.8 795.8,317.5 794.8,314.7 793.8,312.3 792.8,309.7 791.8,307.0 790.8,304.4 789.8,301.7 788.8,298.6 787.8,296.0 786.8,293.3 785.9,290.6 784.9,287.8 783.9,285.1 782.9,282.6 781.9,279.7 780.9,277.3 779.9,274.8 778.9,272.4 777.9,270.1 776.9,267.9 775.9,265.4 775.0,262.9 774.0,260.0 773.0,257.3 772.0,254.3 771.0,251.3 770.0,248.1 769.0,245.0 768.0,241.7 767.0,238.9 766.1,235.7 765.1,232.4 764.1,229.3 763.1,226.0 762.1,222.4 761.1,219.2 760.1,215.8 759.1,212.1 758.1,208.8 757.2,205.0 756.2,201.2 755.2,197.7 754.2,193.6 753.2,189.5 752.2,185.4 751.2,181.0 750.2,176.6 749.3,172.0 748.3,167.5 747.3,162.8 746.3,158.2 745.3,153.7 744.3,148.9 743.3,144.3 742.3,139.5 741.3,134.9 740.3,130.1 739.3,125.5" fill="#a0a0a0"/><polyline points="13.5,508.9 16.0,510.5 18.5,510.5 21.0,511.1 23.5,510.8 26.0,510.7 28.5,509.7 31.0,509.5 33.5,509.6 36.0,511.0 38.5,512.0 41.0,512.3 43.5,511.9 46.0,510.0 48.5,508.3 51.0,509.5 53.5,510.9 56.0,512.3 58.5,511.2 61.0,510.7 63.5,509.5 66.0,509.8 68.5,508.8 71.0,509.9 73.5,510.2 76.0,511.7 78.5,510.6 81.0,509.1 83.5,508.1 86.0,509.4 88.5,510.6 91.0,511.8 93.5,511.0 96.0,510.7 98.5,511.2 101.0,510.4 103.5,509.9 106.0,509.0 108.5,510.3 111.0,510.9 113.5,510.9 116.0,510.3 118.5,511.0 121.0,511.9 123.5,513.0 126.0,513.0 128.5,511.8 131.0,512.1 133.5,511.6 136.0,512.0 138.5,511.8 141.0,512.5 143.5,511.8 146.0,511.4 148.5,511.2 151.0,512.7 153.5,512.3 156.0,512.1 158.5,512.3 161.0,512.0 163.5,511.7 166.0,511.5 168.5,512.7 171.0,512.1 173.5,509.6 176.0,509.4 178.5,511.4 181.0,512.3 183.5,510.6 186.0,510.0 188.5,511.6 191.0,511.5 193.5,510.8 196.0,510.0 198.5,510.0 201.0,509.9 203.5,508.4 206.0,509.2 208.5,508.6 211.0,508.5 213.5,508.2 216.0,508.0 218.5,508.1 221.0,507.4 223.5,508.2 226.0,508.7 228.5,510.4 231.0,510.4 233.5,510.2 236.0,508.6 238.5,508.3 241.0,509.7 243.5,509.8 246.0,510.2 248.5,510.4 251.0,512.2 253.5,512.2 256.0,512.3 258.5,511.8 261.0,511.1 263.5,509.0 266.0,507.6 268.5,509.2 271.0,510.1 273.5,512.0 276.0,512.5 278.5,514.0 281.0,513.0 283.5,510.2 286.0,508.3 288.5,507.6 291.0,509.5 293.5,510.7 296.0,512.7 298.5,512.9 301.0,513.6 303.5,512.8 306.0,512.1 308.5,511.8 311.0,510.7 313.5,511.6 316.0,511.3 318.5,513.0 321.0,510.9 323.5,509.4 326.0,509.6 328.5,509.9 331.0,510.6 333.5,509.6 336.0,510.6 338.5,511.8 341.0,512.9 343.5,512.4 346.0,510.3 348.5,510.2 351.0,510.5 353.5,510.8 356.0,508.6 358.5,507.3 361.0,508.3 363.5,508.7 366.0,510.3 372.0,508.5 376.0,490.0 380.0,462.0 383.0,452.0 386.0,455.0 390.0,458.0 394.0,466.0 398.0,470.0 400.0,486.8 402.2,487.4 403.8,484.4 406.5,487.9 408.0,480.7 410.3,482.4 412.5,477.4 415.4,487.3 418.0,488.8 420.3,474.9 422.8,475.5 425.5,484.4 427.3,476.6 428.9,477.1 431.8,478.2 434.7,476.9 436.7,482.5 438.7,490.5 440.6,483.0 442.4,477.1 444.9,481.0 447.1,486.9 448.8,476.8 451.3,492.0 452.8,483.5 455.8,489.8 458.8,485.2 461.8,477.8 464.0,490.7 466.1,484.3 468.2,483.5 470.9,493.2 472.8,483.0 475.5,489.9 477.0,495.0 479.0,527.0 481.0,530.3 483.9,530.8 486.3,526.4 488.0,530.1 490.7,529.8 492.6,528.3 495.5,524.0 497.1,523.5 498.9,526.7 501.6,527.1 504.2,527.7 507.1,523.4 510.0,524.7 511.9,523.4 513.6,521.8 516.3,518.5 518.6,521.0 520.6,518.0 522.9,519.5 524.5,519.6 527.0,516.9 529.7,516.3 531.9,517.9 534.7,521.0 537.3,516.3 539.3,519.6 541.6,517.8 545.0,514.0 547.5,494.0 550.0,505.0 553.0,515.0 553.0,511.1 555.5,511.4 558.0,512.5 560.5,510.5 563.0,509.6 565.5,508.7 568.0,509.0 570.5,510.4 573.0,511.1 575.5,510.4 578.0,510.1 580.5,509.1 583.0,511.3 585.5,512.1 588.0,513.3 590.5,512.9 593.0,511.6 595.5,510.9 598.0,510.4 600.5,510.4 603.0,509.5 605.5,509.7 608.0,511.0 610.5,510.9 613.0,510.1 615.5,508.2 618.0,508.5 620.5,508.5 623.0,508.3 625.5,509.0 628.0,508.8 630.5,510.6 633.0,509.5 635.5,510.5 638.0,510.9 640.5,510.7 643.0,509.7 645.5,509.6 648.0,510.2 650.5,510.1 653.0,508.0 655.5,509.0 658.0,508.9 660.5,510.7 663.0,510.0 665.5,509.6 668.0,509.9 670.5,510.7 673.0,512.1 675.5,511.1 678.0,510.6 680.5,511.1 683.0,510.1 685.5,508.7 688.0,495.1 689.6,484.8 691.7,465.7 693.0,460.4 694.8,453.4 696.8,447.5 698.9,444.5 700.2,444.6 701.6,442.8 703.7,426.6 705.1,427.7 706.8,416.0 708.7,408.4 710.1,408.0 712.2,408.3 713.5,402.0 715.0,400.8 716.6,381.9 718.1,381.3 719.5,379.1 722.0,352.0 723.0,348.0 724.0,283.9 725.0,282.0 726.3,327.3 727.7,386.8 729.0,420.0 730.0,357.2 731.0,324.5 732.0,302.0 733.0,295.2 734.0,225.5 735.0,200.0 735.5,161.9 736.0,157.4 736.5,122.0 736.8,180.0 737.2,236.5 737.5,250.0 738.0,299.2 738.5,366.3 739.0,382.0 740.0,389.4 741.0,368.1 742.0,310.0 742.7,383.6 743.3,405.5 744.0,430.0 744.8,464.3 745.7,458.5 746.5,486.0 747.3,419.2 748.2,449.1 749.0,380.0 750.0,386.5 751.0,393.7 752.0,420.0 753.0,417.3 754.0,427.1 755.0,400.0 756.0,443.1 757.0,402.5 758.0,450.0 759.3,462.7 760.7,465.3 762.0,420.0 763.3,474.9 764.7,488.7 766.0,470.0 770.0,500.0 775.0,488.0 780.0,505.0 785.0,495.0 787.0,508.9 789.4,509.1 791.7,515.3 793.6,501.7 795.9,513.5 798.3,506.7 800.2,502.4 802.6,504.4 804.2,502.6 806.6,506.1 808.9,502.7 810.9,509.1 813.2,504.1 815.1,509.2 817.6,503.6 819.6,509.2 821.8,508.3 823.6,506.3 825.1,508.1 827.1,504.5 829.6,504.7 831.1,507.2 832.7,506.8 834.3,504.0 836.6,506.4 838.7,506.7 840.9,504.7 842.9,506.1 845.2,506.1 847.2,506.6 849.6,504.8 851.3,504.1 853.6,504.6 855.7,505.4 857.9,506.4 860.0,504.4 862.0,504.3 863.8,505.6 866.0,505.3 868.3,506.2 870.1,505.5 872.2,503.9 874.7,504.8 876.9,504.4 878.8,504.1 881.3,503.9 882.9,505.5 885.0,504.6 887.4,505.5 889.3,505.5 891.8,505.9 893.6,505.7 895.4,504.7 897.0,503.5" fill="none" stroke="#ffff20" stroke-width="1.0" stroke-opacity="1" stroke-linejoin="round"/><polyline points="13.5,504.4 16.0,507.1 18.5,508.4 21.0,506.8 23.5,507.2 26.0,506.3 28.5,504.6 31.0,508.5 33.5,513.2 36.0,513.1 38.5,508.5 41.0,508.4 43.5,505.4 46.0,504.6 48.5,504.0 51.0,503.3 53.5,500.5 56.0,501.2 58.5,503.4 61.0,507.1 63.5,506.4 66.0,508.0 68.5,506.1 71.0,509.4 73.5,508.7 76.0,506.8 78.5,505.6 81.0,502.3 83.5,501.5 86.0,500.3 88.5,503.4 91.0,506.1 93.5,505.2 96.0,505.5 98.5,507.1 101.0,507.4 103.5,505.5 106.0,504.2 108.5,507.3 111.0,505.8 113.5,509.4 116.0,514.7 118.5,514.0 121.0,509.8 123.5,507.9 126.0,507.4 128.5,505.3 131.0,504.5 133.5,504.6 136.0,504.8 138.5,506.1 141.0,505.3 143.5,506.0 146.0,505.5 148.5,507.7 151.0,509.6 153.5,509.1 156.0,506.4 158.5,506.2 161.0,507.4 163.5,509.7 166.0,509.3 168.5,507.4 171.0,506.3 173.5,505.4 176.0,503.7 178.5,504.5 181.0,505.9 183.5,506.0 186.0,506.3 188.5,505.6 191.0,505.4 193.5,502.0 196.0,501.5 198.5,502.0 201.0,503.2 203.5,503.3 206.0,505.4 208.5,507.5 211.0,507.2 213.5,505.7 216.0,502.2 218.5,500.0 221.0,499.3 223.5,501.8 226.0,504.7 228.5,504.8 231.0,504.1 233.5,505.2 236.0,506.1 238.5,507.6 241.0,506.1 243.5,507.4 246.0,506.2 248.5,505.9 251.0,506.1 253.5,504.6 256.0,505.8 258.5,506.6 261.0,506.0 263.5,503.2 266.0,500.2 268.5,500.4 271.0,500.1 273.5,502.0 276.0,502.1 278.5,501.8 281.0,503.3 283.5,504.6 286.0,506.9 288.5,504.6 291.0,504.3 293.5,503.9 296.0,502.6 298.5,503.7 301.0,502.7 303.5,502.5 306.0,500.7 308.5,501.5 311.0,505.2 313.5,507.1 316.0,509.8 318.5,507.3 321.0,505.7 323.5,504.4 326.0,503.4 328.5,506.9 331.0,505.4 333.5,505.8 336.0,502.3 338.5,501.9 341.0,505.1 343.5,508.5 346.0,509.7 348.5,506.4 351.0,501.6 353.5,499.3 356.0,499.7 358.5,502.7 361.0,505.3 363.5,508.0 366.0,508.8 372.0,503.0 376.0,490.0 380.0,462.0 383.0,446.0 386.0,449.0 390.0,458.0 394.0,466.0 398.0,470.0 400.0,481.6 402.5,483.3 405.1,479.4 408.1,477.0 410.5,482.5 413.2,479.4 416.0,477.3 418.6,488.7 420.9,480.5 423.0,485.0 424.8,480.6 427.6,487.0 429.5,488.4 431.9,480.7 434.3,488.1 436.0,483.7 438.7,488.4 440.6,485.5 442.8,490.8 445.6,481.0 447.1,486.8 448.7,482.4 450.3,481.4 452.8,481.7 455.1,495.9 456.8,492.7 459.2,483.5 462.1,492.8 464.2,495.3 465.8,494.6 468.6,483.3 471.5,494.3 474.4,486.5 477.0,495.0 479.0,527.0 481.0,533.0 483.0,527.3 484.5,530.3 486.9,527.2 489.3,526.2 491.5,529.0 493.3,525.4 496.2,530.4 498.6,524.2 500.9,530.3 503.5,527.8 505.1,526.7 506.9,529.2 508.4,523.6 511.3,522.3 513.2,523.2 516.0,525.4 518.9,521.3 520.6,522.0 523.2,523.4 526.1,523.5 527.7,520.4 529.5,519.7 532.0,520.4 534.7,516.9 537.5,517.3 540.2,521.6 541.7,519.2 545.0,514.0 547.5,492.0 550.0,505.0 553.0,515.0 553.0,506.6 555.5,508.1 558.0,506.8 560.5,505.8 563.0,505.2 565.5,505.3 568.0,505.7 570.5,508.4 573.0,511.4 575.5,511.2 578.0,507.5 580.5,504.6 583.0,507.1 585.5,507.7 588.0,509.3 590.5,506.0 593.0,506.8 595.5,504.6 598.0,506.8 600.5,506.8 603.0,509.3 605.5,508.9 608.0,509.0 610.5,505.8 613.0,507.1 615.5,505.5 618.0,507.5 620.5,508.1 623.0,511.2 625.5,510.6 628.0,510.3 630.5,508.0 633.0,508.9 635.5,507.4 638.0,509.3 640.5,508.0 643.0,507.3 645.5,505.6 648.0,508.2 650.5,509.6 653.0,509.6 655.5,508.9 658.0,508.4 660.5,508.0 663.0,506.8 665.5,504.6 668.0,504.4 670.5,502.6 673.0,502.5 675.5,504.1 678.0,507.2 680.5,510.4 683.0,508.7 685.5,509.1 688.0,490.3 689.9,479.3 691.6,471.8 693.7,463.0 695.4,461.6 697.3,451.6 699.5,448.4 700.7,454.2 702.9,444.7 704.8,437.9 706.1,432.9 708.0,426.4 709.6,411.4 711.6,409.0 713.7,395.3 715.6,400.1 716.9,382.1 718.6,381.9 722.0,330.0 722.7,290.7 723.3,241.1 724.0,205.0 724.7,280.2 725.3,360.7 726.0,380.0 726.7,341.2 727.3,293.0 728.0,262.0 728.7,352.2 729.3,341.5 730.0,420.0 730.7,346.7 731.3,290.5 732.0,185.0 732.7,246.6 733.3,281.5 734.0,300.0 734.8,369.5 735.7,406.0 736.5,465.0 737.2,431.3 737.8,283.1 738.5,252.0 739.3,281.9 740.2,320.1 741.0,360.0 742.0,329.1 743.0,248.0 744.0,215.0 744.7,274.7 745.3,334.2 746.0,400.0 747.0,387.6 748.0,355.6 749.0,330.0 750.0,394.0 751.0,395.8 752.0,432.0 753.0,395.1 754.0,416.7 755.0,392.0 756.0,406.5 757.0,400.7 758.0,462.0 759.0,446.8 760.0,416.2 761.0,440.0 762.0,471.1 763.0,495.0 764.0,500.0 765.3,495.0 766.7,495.0 768.0,515.0 772.0,502.0 777.0,527.0 781.0,535.0 785.0,510.0 790.0,528.0 796.0,535.0 800.0,515.0 802.0,512.7 804.3,519.4 806.1,515.9 807.7,513.9 809.8,514.4 811.7,517.0 813.8,511.5 815.9,516.5 817.4,515.9 819.0,513.2 820.8,510.2 822.4,514.2 824.2,512.9 825.8,513.1 828.3,513.3 830.2,513.9 832.0,510.3 833.9,513.0 835.8,509.7 837.9,510.7 840.1,510.5 842.3,509.1 844.2,510.6 846.2,509.4 848.1,506.8 850.0,508.0 851.9,506.8 853.5,506.0 855.7,506.9 858.1,507.3 860.3,506.7 862.7,506.5 865.0,506.0 866.9,506.2 869.3,505.8 871.6,505.6 873.7,505.0 876.1,504.5 878.3,506.0 880.0,504.2 881.8,504.9 883.9,504.4 885.6,504.2 887.6,504.1 889.4,504.2 891.5,505.3 893.3,506.2 895.1,506.0 896.9,505.1 897.0,505.5" fill="none" stroke="#00f000" stroke-width="1.0" stroke-opacity="1" stroke-linejoin="round"/><polyline points="13.5,503.5 16.0,502.6 18.5,501.6 21.0,499.2 23.5,498.7 26.0,498.3 28.5,499.5 31.0,500.6 33.5,503.5 36.0,502.5 38.5,499.4 41.0,496.9 43.5,499.6 46.0,499.4 48.5,499.4 51.0,496.6 53.5,497.0 56.0,498.2 58.5,498.4 61.0,499.5 63.5,500.3 66.0,502.4 68.5,502.4 71.0,502.6 73.5,502.1 76.0,503.6 78.5,501.6 81.0,500.8 83.5,499.8 86.0,502.5 88.5,503.5 91.0,503.1 93.5,500.4 96.0,499.1 98.5,498.1 101.0,500.9 103.5,503.3 106.0,505.9 108.5,504.1 111.0,503.4 113.5,501.1 116.0,500.9 118.5,498.8 121.0,499.3 123.5,498.4 126.0,498.2 128.5,500.1 131.0,499.5 133.5,502.3 136.0,501.4 138.5,501.4 141.0,500.1 143.5,501.3 146.0,504.7 148.5,505.0 151.0,504.2 153.5,503.1 156.0,502.0 158.5,501.2 161.0,500.8 163.5,501.2 166.0,502.2 168.5,501.6 171.0,503.0 173.5,500.1 176.0,500.1 178.5,497.4 181.0,499.6 183.5,501.2 186.0,503.2 188.5,502.8 191.0,501.9 193.5,500.7 196.0,500.0 198.5,499.8 201.0,501.4 203.5,501.4 206.0,501.0 208.5,499.8 211.0,500.5 213.5,501.2 216.0,501.2 218.5,501.7 221.0,502.4 223.5,503.2 226.0,504.3 228.5,502.3 231.0,503.7 233.5,500.7 236.0,500.9 238.5,500.5 241.0,499.9 243.5,500.9 246.0,501.1 248.5,504.6 251.0,504.8 253.5,502.8 256.0,500.5 258.5,500.3 261.0,499.2 263.5,498.0 266.0,499.0 268.5,501.1 271.0,501.7 273.5,499.9 276.0,498.6 278.5,501.3 281.0,500.8 283.5,502.5 286.0,502.0 288.5,502.1 291.0,500.3 293.5,499.4 296.0,499.7 298.5,501.1 301.0,500.3 303.5,501.8 306.0,501.2 308.5,500.4 311.0,500.4 313.5,502.2 316.0,504.3 318.5,503.4 321.0,503.3 323.5,504.3 326.0,502.2 328.5,500.7 331.0,497.2 333.5,498.5 336.0,497.5 338.5,499.2 341.0,500.5 343.5,502.9 346.0,502.1 348.5,499.6 351.0,500.1 353.5,502.1 356.0,504.2 358.5,500.8 361.0,498.0 363.5,499.5 366.0,501.1 372.0,499.0 376.0,490.0 380.0,462.0 383.0,448.0 386.0,451.0 390.0,458.0 394.0,466.0 398.0,470.0 400.0,495.8 402.7,494.2 405.4,486.5 407.3,489.5 409.9,495.5 412.5,492.3 414.8,486.3 417.3,493.8 419.5,495.2 422.5,498.9 424.2,488.5 426.6,495.2 428.5,499.2 430.7,496.7 432.3,489.0 433.8,497.4 436.1,500.1 438.5,490.3 440.5,491.2 442.3,487.1 444.8,490.6 447.0,497.1 448.9,492.9 450.9,491.3 453.4,487.8 455.5,488.2 458.0,491.4 460.9,494.6 463.4,495.5 466.2,498.5 468.6,488.0 470.3,499.6 472.4,503.4 474.9,501.2 477.0,495.0 479.0,527.0 481.0,535.2 483.5,534.6 485.6,529.4 487.3,529.0 490.1,531.3 491.7,526.6 493.9,529.7 495.9,525.7 497.8,531.3 500.4,530.3 502.3,528.9 504.1,526.0 507.0,524.8 509.0,524.4 511.8,527.2 514.2,527.8 516.4,527.8 519.0,523.0 520.9,524.3 523.1,525.6 525.5,524.8 527.9,521.0 530.6,525.5 533.0,523.1 534.9,518.6 537.0,521.4 539.6,520.1 541.9,516.9 543.5,516.8 545.0,514.0 547.5,498.0 550.0,505.0 553.0,515.0 553.0,502.4 555.5,502.7 558.0,504.9 560.5,506.9 563.0,509.1 565.5,508.7 568.0,505.6 570.5,503.0 573.0,503.9 575.5,506.1 578.0,508.2 580.5,505.4 583.0,503.9 585.5,501.3 588.0,502.3 590.5,502.7 593.0,503.9 595.5,502.6 598.0,501.4 600.5,501.1 603.0,503.7 605.5,505.8 608.0,506.4 610.5,503.4 613.0,502.6 615.5,501.9 618.0,503.8 620.5,503.7 623.0,505.1 625.5,503.8 628.0,504.9 630.5,502.2 633.0,501.7 635.5,501.9 638.0,504.7 640.5,505.2 643.0,503.2 645.5,503.5 648.0,504.4 650.5,504.0 653.0,504.1 655.5,503.9 658.0,504.6 660.5,503.0 663.0,502.3 665.5,503.2 668.0,502.8 670.5,502.8 673.0,503.3 675.5,502.9 678.0,504.4 680.5,504.4 683.0,506.5 685.5,504.2 688.0,497.2 689.9,472.5 692.0,465.8 693.4,455.5 695.6,458.1 697.0,456.7 698.3,451.6 700.1,450.6 702.2,444.7 704.3,433.7 706.4,423.3 708.3,419.4 709.9,415.7 711.8,400.8 713.6,400.2 715.4,387.4 717.3,383.9 719.3,372.9 722.0,362.0 723.3,338.6 724.7,331.8 726.0,300.0 727.0,368.6 728.0,395.9 729.0,439.0 729.7,407.1 730.3,287.4 731.0,252.0 732.0,196.9 732.9,194.3 733.9,177.0 734.3,230.6 734.6,280.2 735.0,300.0 736.0,292.5 737.0,362.5 738.0,382.0 739.0,333.3 740.0,310.9 741.0,272.0 742.0,266.5 743.0,298.2 744.0,352.0 745.3,379.6 746.7,372.6 748.0,402.0 749.0,432.8 750.0,387.9 751.0,380.0 752.0,400.6 753.0,420.3 754.0,478.0 755.0,460.8 756.0,440.2 757.0,420.0 758.0,421.2 759.0,495.0 760.0,482.0 761.3,488.7 762.7,495.0 764.0,500.0 765.3,495.0 766.7,495.0 768.0,530.0 773.0,518.0 778.0,535.0 784.0,516.0 786.0,512.6 788.5,521.2 790.1,520.7 791.7,517.6 793.3,511.7 795.2,523.1 797.5,523.7 799.8,518.8 801.9,522.4 803.5,516.9 805.5,511.0 807.9,517.6 809.8,518.3 811.7,517.1 813.8,517.7 815.8,511.1 818.1,512.0 820.1,516.5 822.4,510.4 824.7,515.4 826.7,510.9 828.6,512.1 830.2,513.3 832.3,510.8 834.6,509.4 837.0,511.8 839.0,508.5 840.9,508.2 843.0,508.0 845.0,508.6 846.8,508.8 848.9,509.2 850.8,508.0 853.0,506.4 855.1,506.1 857.1,506.6 859.5,507.3 861.3,506.7 863.2,504.8 865.2,504.6 867.7,506.0 869.2,506.2 871.6,504.1 873.8,505.1 875.4,505.5 876.9,504.6 878.9,505.7 880.9,504.5 882.8,505.1 884.7,504.0 887.1,504.3 888.8,504.3 891.2,504.0 893.3,505.2 895.1,505.7 896.7,504.1 897.0,506.0" fill="none" stroke="#3a5cff" stroke-width="1.0" stroke-opacity="1" stroke-linejoin="round"/><polyline points="13.5,505.7 16.0,506.7 18.5,507.5 21.0,506.6 23.5,504.6 26.0,503.8 28.5,502.8 31.0,504.1 33.5,504.1 36.0,506.1 38.5,504.3 41.0,504.2 43.5,501.7 46.0,503.7 48.5,504.2 51.0,505.3 53.5,504.0 56.0,504.8 58.5,504.6 61.0,504.3 63.5,503.7 66.0,503.4 68.5,503.1 71.0,504.2 73.5,505.3 76.0,506.9 78.5,507.1 81.0,506.3 83.5,505.5 86.0,504.1 88.5,504.2 91.0,505.0 93.5,503.8 96.0,504.0 98.5,503.6 101.0,504.6 103.5,503.3 106.0,503.8 108.5,502.8 111.0,504.4 113.5,502.8 116.0,502.8 118.5,501.7 121.0,501.5 123.5,501.8 126.0,503.3 128.5,505.2 131.0,505.8 133.5,505.7 136.0,505.0 138.5,505.4 141.0,506.0 143.5,505.5 146.0,506.6 148.5,506.1 151.0,507.1 153.5,504.7 156.0,502.9 158.5,501.0 161.0,502.0 163.5,504.5 166.0,506.9 168.5,508.3 171.0,506.0 173.5,505.5 176.0,505.3 178.5,507.3 181.0,507.5 183.5,505.7 186.0,503.9 188.5,503.9 191.0,505.6 193.5,507.7 196.0,506.7 198.5,507.1 201.0,504.9 203.5,506.4 206.0,506.4 208.5,507.0 211.0,504.4 213.5,503.4 216.0,504.4 218.5,505.3 221.0,503.8 223.5,502.7 226.0,504.0 228.5,504.1 231.0,506.0 233.5,504.4 236.0,504.7 238.5,502.3 241.0,504.4 243.5,506.4 246.0,507.0 248.5,504.5 251.0,503.8 253.5,505.4 256.0,505.2 258.5,505.1 261.0,505.0 263.5,506.3 266.0,506.1 268.5,506.0 271.0,505.3 273.5,504.5 276.0,504.1 278.5,505.0 281.0,505.7 283.5,504.8 286.0,505.9 288.5,505.2 291.0,506.2 293.5,506.0 296.0,506.4 298.5,504.6 301.0,502.6 303.5,501.7 306.0,501.9 308.5,501.6 311.0,502.4 313.5,503.1 316.0,504.0 318.5,504.9 321.0,505.8 323.5,506.5 326.0,505.7 328.5,505.6 331.0,505.2 333.5,504.5 336.0,504.2 338.5,503.5 341.0,505.1 343.5,505.7 346.0,505.4 348.5,504.7 351.0,503.9 353.5,504.1 356.0,503.0 358.5,501.8 361.0,503.8 363.5,505.8 366.0,506.9 372.0,503.0 376.0,490.0 380.0,462.0 383.0,450.0 386.0,453.0 390.0,458.0 394.0,466.0 398.0,470.0 400.0,478.7 401.9,479.5 404.8,480.8 407.0,484.3 409.9,469.7 412.0,476.2 413.9,479.0 415.7,481.2 418.4,470.5 421.0,473.9 423.4,480.9 426.4,482.9 428.4,482.0 430.1,481.8 432.3,474.8 434.1,474.2 436.8,472.5 438.7,474.2 440.4,482.9 442.8,482.1 445.6,478.8 447.2,474.8 449.5,483.4 452.3,480.4 454.2,481.8 457.1,477.9 460.0,487.3 462.3,480.7 464.0,474.9 465.6,483.0 468.2,489.3 470.6,489.5 472.7,476.0 474.3,478.6 477.0,495.0 479.0,527.0 481.0,533.4 482.9,527.8 485.5,528.3 487.9,526.2 490.6,531.0 493.3,530.6 495.3,523.9 497.2,529.5 499.4,524.2 501.2,523.6 503.3,528.5 506.2,526.8 508.8,522.3 511.5,522.0 513.7,520.2 516.6,520.3 519.0,523.5 521.4,523.2 523.5,523.5 526.4,521.7 529.4,522.8 530.9,521.2 532.6,520.8 534.6,521.8 536.2,522.1 537.8,515.5 539.3,515.7 542.3,520.1 545.0,514.0 547.5,496.0 550.0,505.0 553.0,515.0 553.0,508.4 555.5,509.8 558.0,508.7 560.5,509.1 563.0,509.0 565.5,510.0 568.0,508.3 570.5,507.4 573.0,507.5 575.5,508.1 578.0,508.3 580.5,508.7 583.0,508.4 585.5,509.3 588.0,507.0 590.5,507.3 593.0,506.9 595.5,506.7 598.0,507.1 600.5,506.0 603.0,507.5 605.5,507.3 608.0,506.9 610.5,507.7 613.0,506.7 615.5,506.6 618.0,505.3 620.5,504.8 623.0,504.7 625.5,505.5 628.0,505.5 630.5,506.6 633.0,506.9 635.5,507.7 638.0,508.4 640.5,508.2 643.0,507.4 645.5,505.5 648.0,505.4 650.5,507.1 653.0,509.0 655.5,508.8 658.0,507.9 660.5,508.1 663.0,508.1 665.5,508.7 668.0,508.6 670.5,506.8 673.0,506.7 675.5,505.9 678.0,505.7 680.5,504.5 683.0,504.7 685.5,506.0 688.0,491.8 689.5,479.2 691.6,471.2 693.3,458.9 694.6,445.6 696.4,450.9 697.7,438.2 699.4,436.2 700.7,430.8 702.3,435.7 703.7,431.4 705.0,418.4 706.9,407.5 708.4,404.0 709.8,410.9 711.2,405.4 713.3,393.9 715.3,389.0 717.3,384.9 718.9,383.0 720.0,362.0 721.0,326.9 722.0,326.5 723.0,300.0 723.7,250.2 724.3,216.2 725.0,200.0 725.7,211.7 726.3,191.4 727.0,130.0 727.3,142.6 727.7,243.3 728.0,250.0 728.7,300.4 729.3,277.6 730.0,350.0 731.0,278.7 732.0,264.9 733.0,230.0 734.0,317.7 735.0,373.2 736.0,400.0 737.0,340.7 738.0,317.0 739.0,282.0 740.0,332.0 741.0,290.8 742.0,330.0 743.0,288.4 744.0,303.2 745.0,300.0 746.0,328.5 747.0,357.8 748.0,342.0 748.7,365.5 749.3,306.0 750.0,322.0 751.0,318.0 752.0,332.3 753.0,382.0 754.0,379.0 755.0,353.1 756.0,350.0 756.7,401.1 757.3,393.9 758.0,402.0 759.0,420.5 760.0,435.6 761.0,430.0 762.0,434.0 763.0,488.3 764.0,470.0 765.0,495.0 766.0,495.0 767.0,500.0 771.0,522.0 776.0,508.0 780.0,526.0 785.0,512.0 787.0,518.8 788.7,505.8 790.5,516.9 792.2,518.9 794.6,515.7 796.6,507.7 798.9,508.1 800.9,515.3 803.0,508.8 805.4,509.7 807.3,510.8 809.5,506.8 811.7,510.8 814.0,509.6 816.0,514.1 817.6,512.4 819.6,508.7 821.3,508.0 823.7,507.8 826.1,509.4 827.9,510.6 830.0,510.8 831.6,509.6 833.2,507.2 835.1,507.6 836.9,508.4 839.1,507.6 841.1,508.7 842.9,509.2 844.4,506.9 846.7,506.3 848.5,505.9 851.0,507.6 852.6,506.5 854.2,505.0 856.0,506.6 858.0,505.3 860.1,504.6 861.9,504.4 864.2,504.9 866.5,504.6 868.4,505.2 870.1,505.1 872.4,504.0 874.1,503.8 876.1,504.1 878.1,504.2 880.1,504.5 882.4,505.8 884.8,504.9 887.2,505.9 889.1,506.2 891.5,504.2 893.8,505.4 895.9,505.5 897.0,504.0" fill="none" stroke="#ff1010" stroke-width="1.0" stroke-opacity="1" stroke-linejoin="round"/><polyline points="740.0,335.0 744.0,322.0 748.0,345.0 752.0,362.0 755.0,372.0 758.0,395.0" fill="none" stroke="#ff1010" stroke-width="2.5" stroke-opacity="1" stroke-linejoin="round"/><rect x="13.5" y="121.5" width="887.0" height="416.0" fill="none" stroke="#e0e0e0" stroke-width="1" shape-rendering="crispEdges"/><text x="473" y="109" text-anchor="middle" fill="#e2e2e2" font-size="12.5" letter-spacing="0.4">Ускорение каждого цилиндра после прохождения ВМТ</text></svg>

<div class="seg" style="left:3px;width:234px;background:#00ff00;border:1px solid #66ff66;color:#0a7a0a"><div class="cb"><svg width="11" height="11"><path d="M2,5 L4.5,8 L9,2.5" stroke="#2a4a9a" stroke-width="2" fill="none"/></svg></div>1 цил.</div>
<div class="seg" style="left:238px;width:234px;background:#ff0000;border:1px solid #ff6a6a;color:#8a0000"><div class="cb"><svg width="11" height="11"><path d="M2,5 L4.5,8 L9,2.5" stroke="#2a4a9a" stroke-width="2" fill="none"/></svg></div>3 цил.</div>
<div class="seg" style="left:473px;width:234px;background:#ffff00;border:1px solid #ffff80;color:#303000"><div class="cb"><svg width="11" height="11"><path d="M2,5 L4.5,8 L9,2.5" stroke="#2a4a9a" stroke-width="2" fill="none"/></svg></div>4 цил.</div>
<div class="seg" style="left:709px;width:232px;background:#3366ff;border:1px solid #7a9aff;color:#0a1a60"><div class="cb"><svg width="11" height="11"><path d="M2,5 L4.5,8 L9,2.5" stroke="#2a4a9a" stroke-width="2" fill="none"/></svg></div>2 цил.</div>

<div id="scroll" class="a"></div>
<svg class="a" style="left:0;top:583px" width="945" height="17">
  <circle cx="9.5" cy="8.5" r="5.5" fill="#fff" stroke="#1a1a4a" stroke-width="1.2"/><rect x="6" y="7.5" width="7" height="2" fill="#1a1a6a"/>
  <rect x="17" y="1" width="1" height="15" fill="#a0a098"/>
  <text x="28" y="14" font-size="11.5" letter-spacing="1.2">1:1</text>
  <rect x="54" y="1" width="1" height="15" fill="#a0a098"/>
  <circle cx="62.5" cy="8.5" r="5.5" fill="#fff" stroke="#6a1a1a" stroke-width="1.2"/><rect x="59" y="7.5" width="7" height="2" fill="#a01010"/><rect x="61.5" y="5" width="2" height="7" fill="#a01010"/>
  <rect x="69" y="1" width="1" height="15" fill="#c0c0b8"/>
  <path d="M79,5 L75,8.5 L79,12 Z" fill="#000"/>
  <rect x="83" y="1" width="1" height="15" fill="#c0c0b8"/>
  <rect x="926" y="1" width="16" height="15" fill="#ECE9D8" stroke="#c8c4b0"/>
  <path d="M932,5 L936,8.5 L932,12 Z" fill="#000"/>
</svg>

<!-- splitter vertical -->
<div class="a" style="left:944px;top:245px;width:7px;height:202px;background:#ECE9D8;border:1px solid #d0ccbc"></div>
<svg class="a" style="left:944px;top:245px" width="7" height="202"><path d="M2,5 L5,8 L2,11 Z" fill="#3a6ab0"/><path d="M2,192 L5,195 L2,198 Z" fill="#3a6ab0"/><line x1="3.5" y1="14" x2="3.5" y2="188" stroke="#9a9a90" stroke-dasharray="1 2"/></svg>

<!-- right panels -->
<div class="panel" style="top:93px;height:167px"></div>
<div class="panel" style="top:261px;height:167px"></div>
<div class="panel" style="top:430px;height:166px"></div>
<div class="ptitle" style="top:95px">Ускорение на холостых %</div>
<div class="ptitle" style="top:264px">Ускорение под нагрузкой %</div>
<div class="ptitle" style="top:433px">Относительная компрессия %</div>
<svg width="1200" height="692" style="position:absolute;left:0;top:0" font-family="Liberation Sans, sans-serif"><defs>
<linearGradient id="gG" x1="0" y1="0" x2="0" y2="1"><stop offset="0" stop-color="#00e000"/><stop offset="0.55" stop-color="#33ee33"/><stop offset="1" stop-color="#e8ffe8"/></linearGradient>
<linearGradient id="gR" x1="0" y1="0" x2="0" y2="1"><stop offset="0" stop-color="#ff0000"/><stop offset="0.55" stop-color="#ff4040"/><stop offset="1" stop-color="#ffe8e8"/></linearGradient>
<linearGradient id="gY" x1="0" y1="0" x2="0" y2="1"><stop offset="0" stop-color="#ffff00"/><stop offset="0.55" stop-color="#ffff40"/><stop offset="1" stop-color="#ffffe8"/></linearGradient>
<linearGradient id="gB" x1="0" y1="0" x2="0" y2="1"><stop offset="0" stop-color="#3060f0"/><stop offset="0.55" stop-color="#5080f0"/><stop offset="1" stop-color="#e8eeff"/></linearGradient>
</defs><rect x="977.5" y="123.5" width="215.0" height="112.0" fill="#c0c0c0"/><g stroke="#909090" stroke-dasharray="2 2" shape-rendering="crispEdges"><line x1="977.5" y1="213.6" x2="1192.5" y2="213.6"/><line x1="977.5" y1="192.2" x2="1192.5" y2="192.2"/><line x1="977.5" y1="170.7" x2="1192.5" y2="170.7"/><line x1="977.5" y1="149.3" x2="1192.5" y2="149.3"/><line x1="1011.8" y1="123.5" x2="1011.8" y2="235.5"/><line x1="1060.6" y1="123.5" x2="1060.6" y2="235.5"/><line x1="1110.4" y1="123.5" x2="1110.4" y2="235.5"/><line x1="1159.2" y1="123.5" x2="1159.2" y2="235.5"/></g><rect x="994.8" y="176.1" width="34" height="58.9" fill="url(#gG)" stroke="#101010" stroke-width="1.5"/><text x="1011.8" y="228.0" text-anchor="middle" font-size="11.7" font-weight="bold" fill="#101010">55</text><rect x="1043.6" y="185.7" width="34" height="49.3" fill="url(#gR)" stroke="#101010" stroke-width="1.5"/><text x="1060.6" y="228.0" text-anchor="middle" font-size="11.7" font-weight="bold" fill="#101010">46</text><rect x="1093.4" y="212.5" width="34" height="22.5" fill="url(#gY)" stroke="#101010" stroke-width="1.5"/><text x="1110.4" y="228.0" text-anchor="middle" font-size="11.7" font-weight="bold" fill="#101010">21</text><rect x="1142.2" y="127.9" width="34" height="107.1" fill="url(#gB)" stroke="#101010" stroke-width="1.5"/><text x="1159.2" y="228.0" text-anchor="middle" font-size="11.7" font-weight="bold" fill="#101010">100</text><path d="M977.5,235.5 V123.5 H1192.5 V235.5 Z" fill="none" stroke="#000" stroke-width="2"/><text x="958" y="239.0" font-size="10" fill="#101010">0</text><line x1="973" y1="235.0" x2="977.5" y2="235.0" stroke="#606060"/><text x="958" y="217.6" font-size="10" fill="#101010">20</text><line x1="973" y1="213.6" x2="977.5" y2="213.6" stroke="#606060"/><text x="958" y="196.2" font-size="10" fill="#101010">40</text><line x1="973" y1="192.2" x2="977.5" y2="192.2" stroke="#606060"/><text x="958" y="174.7" font-size="10" fill="#101010">60</text><line x1="973" y1="170.7" x2="977.5" y2="170.7" stroke="#606060"/><text x="958" y="153.3" font-size="10" fill="#101010">80</text><line x1="973" y1="149.3" x2="977.5" y2="149.3" stroke="#606060"/><text x="958" y="131.9" font-size="10" fill="#101010">100</text><line x1="973" y1="127.9" x2="977.5" y2="127.9" stroke="#606060"/><text x="1011.8" y="253.5" text-anchor="middle" font-size="12.5" font-weight="bold" fill="#101010">1</text><line x1="1011.8" y1="235.5" x2="1011.8" y2="239.5" stroke="#606060"/><text x="1060.6" y="253.5" text-anchor="middle" font-size="12.5" font-weight="bold" fill="#101010">3</text><line x1="1060.6" y1="235.5" x2="1060.6" y2="239.5" stroke="#606060"/><text x="1110.4" y="253.5" text-anchor="middle" font-size="12.5" font-weight="bold" fill="#101010">4</text><line x1="1110.4" y1="235.5" x2="1110.4" y2="239.5" stroke="#606060"/><text x="1159.2" y="253.5" text-anchor="middle" font-size="12.5" font-weight="bold" fill="#101010">2</text><line x1="1159.2" y1="235.5" x2="1159.2" y2="239.5" stroke="#606060"/><rect x="977.5" y="292.5" width="215.0" height="112.0" fill="#c0c0c0"/><g stroke="#909090" stroke-dasharray="2 2" shape-rendering="crispEdges"><line x1="977.5" y1="382.6" x2="1192.5" y2="382.6"/><line x1="977.5" y1="361.2" x2="1192.5" y2="361.2"/><line x1="977.5" y1="339.7" x2="1192.5" y2="339.7"/><line x1="977.5" y1="318.3" x2="1192.5" y2="318.3"/><line x1="1011.8" y1="292.5" x2="1011.8" y2="404.5"/><line x1="1060.6" y1="292.5" x2="1060.6" y2="404.5"/><line x1="1110.4" y1="292.5" x2="1110.4" y2="404.5"/><line x1="1159.2" y1="292.5" x2="1159.2" y2="404.5"/></g><rect x="994.8" y="308.7" width="34" height="95.3" fill="url(#gG)" stroke="#101010" stroke-width="1.5"/><text x="1011.8" y="397.0" text-anchor="middle" font-size="11.7" font-weight="bold" fill="#101010">89</text><rect x="1043.6" y="296.9" width="34" height="107.1" fill="url(#gR)" stroke="#101010" stroke-width="1.5"/><text x="1060.6" y="397.0" text-anchor="middle" font-size="11.7" font-weight="bold" fill="#101010">100</text><rect x="1093.4" y="302.3" width="34" height="101.7" fill="url(#gY)" stroke="#101010" stroke-width="1.5"/><text x="1110.4" y="397.0" text-anchor="middle" font-size="11.7" font-weight="bold" fill="#101010">95</text><rect x="1142.2" y="307.6" width="34" height="96.4" fill="url(#gB)" stroke="#101010" stroke-width="1.5"/><text x="1159.2" y="397.0" text-anchor="middle" font-size="11.7" font-weight="bold" fill="#101010">90</text><path d="M977.5,404.5 V292.5 H1192.5 V404.5 Z" fill="none" stroke="#000" stroke-width="2"/><text x="958" y="408.0" font-size="10" fill="#101010">0</text><line x1="973" y1="404.0" x2="977.5" y2="404.0" stroke="#606060"/><text x="958" y="386.6" font-size="10" fill="#101010">20</text><line x1="973" y1="382.6" x2="977.5" y2="382.6" stroke="#606060"/><text x="958" y="365.2" font-size="10" fill="#101010">40</text><line x1="973" y1="361.2" x2="977.5" y2="361.2" stroke="#606060"/><text x="958" y="343.7" font-size="10" fill="#101010">60</text><line x1="973" y1="339.7" x2="977.5" y2="339.7" stroke="#606060"/><text x="958" y="322.3" font-size="10" fill="#101010">80</text><line x1="973" y1="318.3" x2="977.5" y2="318.3" stroke="#606060"/><text x="958" y="300.9" font-size="10" fill="#101010">100</text><line x1="973" y1="296.9" x2="977.5" y2="296.9" stroke="#606060"/><text x="1011.8" y="422.5" text-anchor="middle" font-size="12.5" font-weight="bold" fill="#101010">1</text><line x1="1011.8" y1="404.5" x2="1011.8" y2="408.5" stroke="#606060"/><text x="1060.6" y="422.5" text-anchor="middle" font-size="12.5" font-weight="bold" fill="#101010">3</text><line x1="1060.6" y1="404.5" x2="1060.6" y2="408.5" stroke="#606060"/><text x="1110.4" y="422.5" text-anchor="middle" font-size="12.5" font-weight="bold" fill="#101010">4</text><line x1="1110.4" y1="404.5" x2="1110.4" y2="408.5" stroke="#606060"/><text x="1159.2" y="422.5" text-anchor="middle" font-size="12.5" font-weight="bold" fill="#101010">2</text><line x1="1159.2" y1="404.5" x2="1159.2" y2="408.5" stroke="#606060"/><rect x="977.5" y="461.5" width="215.0" height="112.0" fill="#c0c0c0"/><g stroke="#909090" stroke-dasharray="2 2" shape-rendering="crispEdges"><line x1="977.5" y1="551.6" x2="1192.5" y2="551.6"/><line x1="977.5" y1="530.2" x2="1192.5" y2="530.2"/><line x1="977.5" y1="508.7" x2="1192.5" y2="508.7"/><line x1="977.5" y1="487.3" x2="1192.5" y2="487.3"/><line x1="1011.8" y1="461.5" x2="1011.8" y2="573.5"/><line x1="1060.6" y1="461.5" x2="1060.6" y2="573.5"/><line x1="1110.4" y1="461.5" x2="1110.4" y2="573.5"/><line x1="1159.2" y1="461.5" x2="1159.2" y2="573.5"/></g><rect x="994.8" y="473.4" width="34" height="99.6" fill="url(#gG)" stroke="#101010" stroke-width="1.5"/><text x="1011.8" y="566.0" text-anchor="middle" font-size="11.7" font-weight="bold" fill="#101010">93</text><rect x="1043.6" y="468.0" width="34" height="105.0" fill="url(#gR)" stroke="#101010" stroke-width="1.5"/><text x="1060.6" y="566.0" text-anchor="middle" font-size="11.7" font-weight="bold" fill="#101010">98</text><rect x="1093.4" y="465.9" width="34" height="107.1" fill="url(#gY)" stroke="#101010" stroke-width="1.5"/><text x="1110.4" y="566.0" text-anchor="middle" font-size="11.7" font-weight="bold" fill="#101010">100</text><rect x="1142.2" y="470.2" width="34" height="102.8" fill="url(#gB)" stroke="#101010" stroke-width="1.5"/><text x="1159.2" y="566.0" text-anchor="middle" font-size="11.7" font-weight="bold" fill="#101010">96</text><path d="M977.5,573.5 V461.5 H1192.5 V573.5 Z" fill="none" stroke="#000" stroke-width="2"/><text x="958" y="577.0" font-size="10" fill="#101010">0</text><line x1="973" y1="573.0" x2="977.5" y2="573.0" stroke="#606060"/><text x="958" y="555.6" font-size="10" fill="#101010">20</text><line x1="973" y1="551.6" x2="977.5" y2="551.6" stroke="#606060"/><text x="958" y="534.2" font-size="10" fill="#101010">40</text><line x1="973" y1="530.2" x2="977.5" y2="530.2" stroke="#606060"/><text x="958" y="512.7" font-size="10" fill="#101010">60</text><line x1="973" y1="508.7" x2="977.5" y2="508.7" stroke="#606060"/><text x="958" y="491.3" font-size="10" fill="#101010">80</text><line x1="973" y1="487.3" x2="977.5" y2="487.3" stroke="#606060"/><text x="958" y="469.9" font-size="10" fill="#101010">100</text><line x1="973" y1="465.9" x2="977.5" y2="465.9" stroke="#606060"/><text x="1011.8" y="591.5" text-anchor="middle" font-size="12.5" font-weight="bold" fill="#101010">1</text><line x1="1011.8" y1="573.5" x2="1011.8" y2="577.5" stroke="#606060"/><text x="1060.6" y="591.5" text-anchor="middle" font-size="12.5" font-weight="bold" fill="#101010">3</text><line x1="1060.6" y1="573.5" x2="1060.6" y2="577.5" stroke="#606060"/><text x="1110.4" y="591.5" text-anchor="middle" font-size="12.5" font-weight="bold" fill="#101010">4</text><line x1="1110.4" y1="573.5" x2="1110.4" y2="577.5" stroke="#606060"/><text x="1159.2" y="591.5" text-anchor="middle" font-size="12.5" font-weight="bold" fill="#101010">2</text><line x1="1159.2" y1="573.5" x2="1159.2" y2="577.5" stroke="#606060"/></svg>

<!-- bottom control panel -->
<div class="a" style="left:0;top:599px;width:945px;height:1px;background:#fff"></div>
<div class="a" style="left:361px;top:603px;width:477px;height:6px;border:1px solid #c8c4b4;background:#ECE9D8"></div>
<svg class="a" style="left:361px;top:603px" width="477" height="6"><path d="M5,1.5 H10 L7.5,4 Z" fill="#3a5aa0"/><path d="M467,1.5 H472 L469.5,4 Z" fill="#3a5aa0"/><line x1="14" y1="3" x2="463" y2="3" stroke="#9a9aa0" stroke-dasharray="1 2"/></svg>
<div class="a" style="left:332px;top:611px;width:536px;height:59px;border:1px solid #d6d2c0;border-radius:3px"></div>
<div class="a" style="left:342px;top:626px;font-size:10px">Синхро:</div>
<div class="a" style="left:342px;top:650px;font-size:10px">Сигнал:</div>
<div class="combo" style="left:383px;top:623px;width:190px">4.&nbsp; Датчик синхронизации<div class="arr"></div></div>
<div class="combo" style="left:383px;top:645px;width:190px;overflow:hidden;white-space:nowrap">2.&nbsp; Датчик Полож Коленчатого Вал<div class="a" style="right:0;top:0;width:20px;height:17px;background:#fff"></div><div class="arr"></div></div>
<div class="a" style="left:579px;top:618px;width:1px;height:47px;background:#d0ccbc"></div>
<div class="a" style="left:606px;top:626px;font-size:10px">УОЗ</div>
<div class="combo" style="left:632px;top:622px;width:35px;height:20px">10<svg class="a" style="right:2px;top:2px" width="9" height="15"><path d="M1,6 L4.5,2 L8,6 Z M1,9 L4.5,13 L8,9 Z" fill="#000"/></svg></div>
<div class="a" style="left:680px;top:626px;font-size:10px">60-2</div>
<div class="a" style="left:585px;top:650px;font-size:10px">Порядок</div>
<div class="combo" style="left:631px;top:645px;width:92px">1-3-4-2<div class="arr"></div></div>
<div class="combo" style="left:729px;top:645px;width:31px">1<div class="arr"></div></div>
<div class="a" style="left:767px;top:618px;width:1px;height:47px;background:#d0ccbc"></div>
<div class="a" style="left:775px;top:620px;width:84px;height:44px;border:2px solid #3a5a9a;border-radius:3px;background:linear-gradient(#fdfdfd,#f2f1ec 70%,#e2dfd4)"></div>
<div class="a" style="left:778px;top:623px;width:78px;height:38px;border:1px dotted #2a3a7a"></div>
<svg class="a" style="left:783px;top:632px" width="14" height="20"><path d="M1,0 L12,10 L1,20 Z" fill="#20d020"/></svg>
<div class="a" style="left:808px;top:636px;font-size:11.2px;font-weight:bold">Анализ</div>

<div id="status" class="a"></div>
<div class="a" style="left:0;top:598px;width:2px;height:76px;background:#a8a8a0"></div>
<div class="a" style="left:1198px;top:600px;width:1px;height:74px;background:#d8d4c4"></div>
<div class="a" style="left:4px;top:678px;font-size:10px">USB Осциллограф не подключен</div>
<div class="a" style="left:178px;top:676px;width:1px;height:16px;background:#aca899"></div>
<div class="a" style="left:179px;top:676px;width:1px;height:16px;background:#fff"></div>
</body></html>
